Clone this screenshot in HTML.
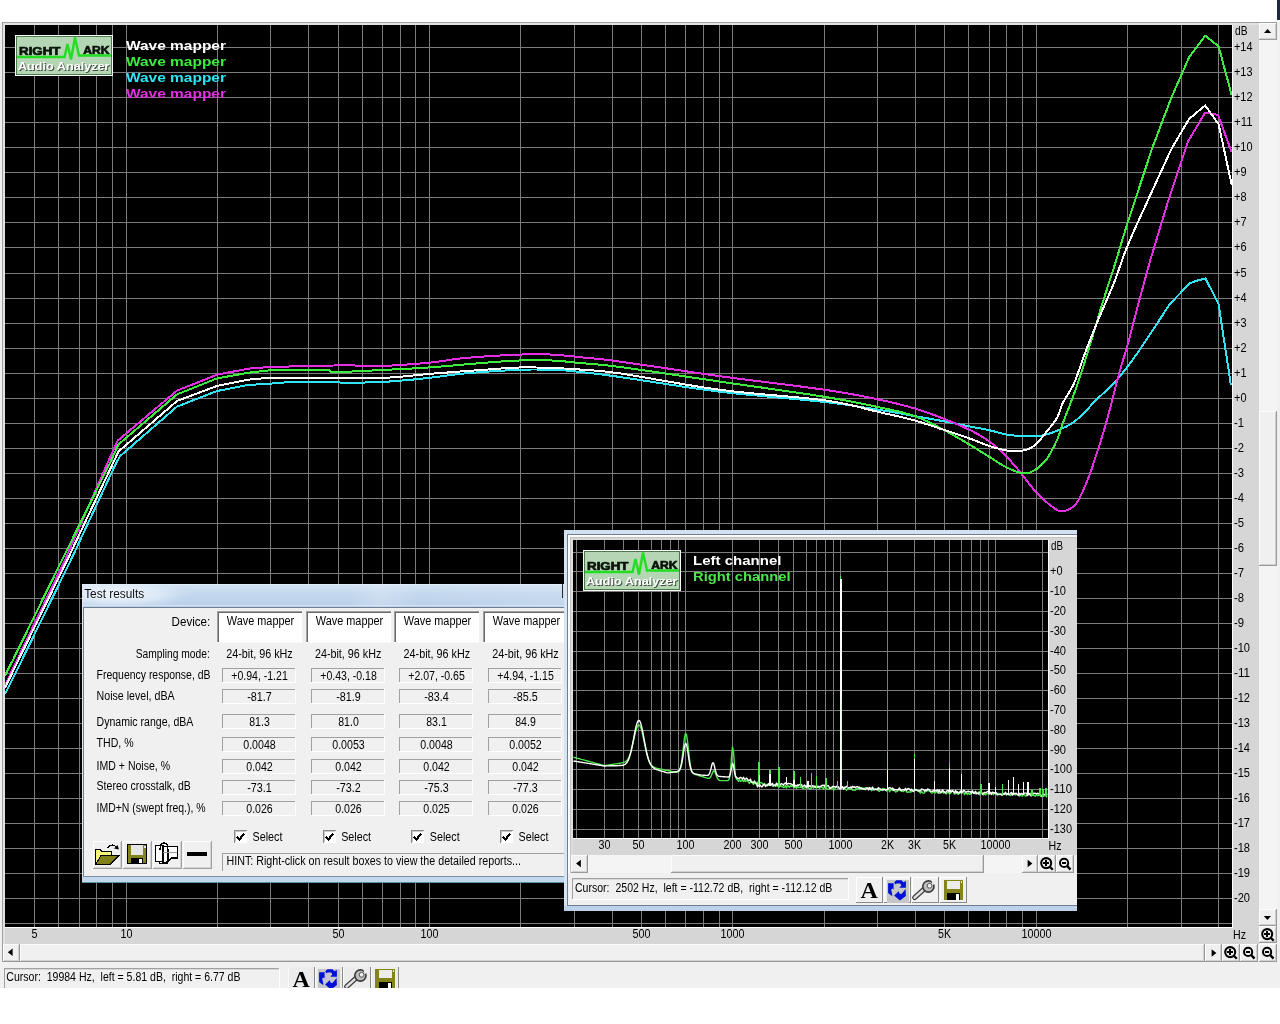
<!DOCTYPE html>
<html><head><meta charset="utf-8"><title>RightMark Audio Analyzer</title>
<style>html,body{margin:0;padding:0;background:#fff;width:1280px;height:1024px;overflow:hidden}svg{display:block;will-change:transform}text{white-space:pre}</style>
</head><body>
<svg width="1280" height="1024" viewBox="0 0 1280 1024" shape-rendering="crispEdges" style="font-family:'Liberation Sans',sans-serif">
<rect x="0" y="0" width="1280" height="1024" fill="#ffffff" />
<rect x="0" y="22" width="1280" height="966" fill="#f0f0f0" />
<rect x="1277" y="0" width="3" height="20" fill="#1c2b3f" />
<rect x="2" y="22" width="1275" height="1" fill="#a0a0a0"/>
<rect x="2" y="22" width="1" height="940" fill="#a0a0a0"/>
<rect x="3" y="23" width="1256" height="921" fill="#d6d6d6" />
<rect x="3" y="23" width="1256" height="2" fill="#e2e2e2" />
<rect x="3" y="23" width="2" height="921" fill="#e2e2e2" />
<rect x="5" y="25" width="1227" height="902" fill="#000000" />
<rect x="1232" y="25" width="1" height="903" fill="#ffffff"/>
<rect x="5" y="927" width="1228" height="1" fill="#ffffff"/>
<rect x="34" y="25" width="1" height="902" fill="#7c7c7c"/>
<rect x="58" y="25" width="1" height="902" fill="#7c7c7c"/>
<rect x="79" y="25" width="1" height="902" fill="#7c7c7c"/>
<rect x="96" y="25" width="1" height="902" fill="#7c7c7c"/>
<rect x="112" y="25" width="1" height="902" fill="#7c7c7c"/>
<rect x="126" y="25" width="1" height="902" fill="#7c7c7c"/>
<rect x="217" y="25" width="1" height="902" fill="#7c7c7c"/>
<rect x="270" y="25" width="1" height="902" fill="#7c7c7c"/>
<rect x="308" y="25" width="1" height="902" fill="#7c7c7c"/>
<rect x="338" y="25" width="1" height="902" fill="#7c7c7c"/>
<rect x="362" y="25" width="1" height="902" fill="#7c7c7c"/>
<rect x="382" y="25" width="1" height="902" fill="#7c7c7c"/>
<rect x="400" y="25" width="1" height="902" fill="#7c7c7c"/>
<rect x="415" y="25" width="1" height="902" fill="#7c7c7c"/>
<rect x="429" y="25" width="1" height="902" fill="#7c7c7c"/>
<rect x="520" y="25" width="1" height="902" fill="#7c7c7c"/>
<rect x="574" y="25" width="1" height="902" fill="#7c7c7c"/>
<rect x="612" y="25" width="1" height="902" fill="#7c7c7c"/>
<rect x="641" y="25" width="1" height="902" fill="#7c7c7c"/>
<rect x="665" y="25" width="1" height="902" fill="#7c7c7c"/>
<rect x="685" y="25" width="1" height="902" fill="#7c7c7c"/>
<rect x="703" y="25" width="1" height="902" fill="#7c7c7c"/>
<rect x="719" y="25" width="1" height="902" fill="#7c7c7c"/>
<rect x="732" y="25" width="1" height="902" fill="#7c7c7c"/>
<rect x="824" y="25" width="1" height="902" fill="#7c7c7c"/>
<rect x="877" y="25" width="1" height="902" fill="#7c7c7c"/>
<rect x="915" y="25" width="1" height="902" fill="#7c7c7c"/>
<rect x="944" y="25" width="1" height="902" fill="#7c7c7c"/>
<rect x="968" y="25" width="1" height="902" fill="#7c7c7c"/>
<rect x="989" y="25" width="1" height="902" fill="#7c7c7c"/>
<rect x="1006" y="25" width="1" height="902" fill="#7c7c7c"/>
<rect x="1022" y="25" width="1" height="902" fill="#7c7c7c"/>
<rect x="1036" y="25" width="1" height="902" fill="#7c7c7c"/>
<rect x="1127" y="25" width="1" height="902" fill="#7c7c7c"/>
<rect x="1181" y="25" width="1" height="902" fill="#7c7c7c"/>
<rect x="1218" y="25" width="1" height="902" fill="#7c7c7c"/>
<rect x="5" y="47" width="1227" height="1" fill="#7c7c7c"/>
<rect x="5" y="72" width="1227" height="1" fill="#7c7c7c"/>
<rect x="5" y="97" width="1227" height="1" fill="#7c7c7c"/>
<rect x="5" y="122" width="1227" height="1" fill="#7c7c7c"/>
<rect x="5" y="147" width="1227" height="1" fill="#7c7c7c"/>
<rect x="5" y="172" width="1227" height="1" fill="#7c7c7c"/>
<rect x="5" y="197" width="1227" height="1" fill="#7c7c7c"/>
<rect x="5" y="222" width="1227" height="1" fill="#7c7c7c"/>
<rect x="5" y="247" width="1227" height="1" fill="#7c7c7c"/>
<rect x="5" y="273" width="1227" height="1" fill="#7c7c7c"/>
<rect x="5" y="298" width="1227" height="1" fill="#7c7c7c"/>
<rect x="5" y="323" width="1227" height="1" fill="#7c7c7c"/>
<rect x="5" y="348" width="1227" height="1" fill="#7c7c7c"/>
<rect x="5" y="373" width="1227" height="1" fill="#7c7c7c"/>
<rect x="5" y="398" width="1227" height="1" fill="#7c7c7c"/>
<rect x="5" y="423" width="1227" height="1" fill="#7c7c7c"/>
<rect x="5" y="448" width="1227" height="1" fill="#7c7c7c"/>
<rect x="5" y="473" width="1227" height="1" fill="#7c7c7c"/>
<rect x="5" y="498" width="1227" height="1" fill="#7c7c7c"/>
<rect x="5" y="523" width="1227" height="1" fill="#7c7c7c"/>
<rect x="5" y="548" width="1227" height="1" fill="#7c7c7c"/>
<rect x="5" y="573" width="1227" height="1" fill="#7c7c7c"/>
<rect x="5" y="598" width="1227" height="1" fill="#7c7c7c"/>
<rect x="5" y="623" width="1227" height="1" fill="#7c7c7c"/>
<rect x="5" y="648" width="1227" height="1" fill="#7c7c7c"/>
<rect x="5" y="673" width="1227" height="1" fill="#7c7c7c"/>
<rect x="5" y="698" width="1227" height="1" fill="#7c7c7c"/>
<rect x="5" y="723" width="1227" height="1" fill="#7c7c7c"/>
<rect x="5" y="748" width="1227" height="1" fill="#7c7c7c"/>
<rect x="5" y="773" width="1227" height="1" fill="#7c7c7c"/>
<rect x="5" y="798" width="1227" height="1" fill="#7c7c7c"/>
<rect x="5" y="823" width="1227" height="1" fill="#7c7c7c"/>
<rect x="5" y="848" width="1227" height="1" fill="#7c7c7c"/>
<rect x="5" y="873" width="1227" height="1" fill="#7c7c7c"/>
<rect x="5" y="898" width="1227" height="1" fill="#7c7c7c"/>
<rect x="5" y="923" width="1227" height="1" fill="#7c7c7c"/>
<clipPath id="mainclip"><rect x="5" y="25" width="1227" height="902"/></clipPath>
<polyline points="5.0,694.0 21.9,660.0 70.9,560.0 115.7,464.0 120.0,456.2 177.0,406.6 217.0,391.0 248.0,385.0 272.0,383.5 290.0,382.0 295.0,381.9 300.8,381.9 307.0,381.9 313.4,381.9 319.5,381.9 325.0,382.0 329.7,382.1 333.8,382.2 337.6,382.4 341.5,382.6 345.7,382.7 350.5,382.7 356.0,382.6 362.0,382.6 368.3,382.4 374.9,382.2 381.5,381.9 388.0,381.6 394.6,381.2 401.3,380.6 408.0,380.0 414.8,379.4 421.5,378.7 428.0,378.0 434.1,377.3 439.9,376.5 445.6,375.7 451.5,374.9 457.9,374.1 465.0,373.4 473.3,372.7 482.5,372.0 492.2,371.3 501.9,370.7 511.0,370.2 519.0,369.8 525.8,369.6 531.8,369.5 537.2,369.5 542.3,369.5 547.1,369.6 552.0,369.8 556.6,370.0 560.6,370.2 564.4,370.4 568.4,370.7 572.8,371.2 578.0,371.7 583.4,372.3 588.7,372.9 594.4,373.6 601.1,374.4 609.5,375.5 620.0,377.0 633.3,379.0 648.9,381.4 666.1,384.0 684.1,386.8 702.4,389.4 720.0,391.7 737.8,393.7 756.5,395.5 775.3,397.3 793.5,398.9 810.3,400.5 825.0,402.0 837.3,403.5 847.8,404.9 856.9,406.3 865.0,407.6 872.6,408.8 880.0,410.0 887.0,411.1 893.2,412.2 898.8,413.2 904.1,414.1 909.2,415.1 914.4,416.0 919.6,416.9 924.6,417.8 929.5,418.7 934.3,419.6 939.0,420.4 943.6,421.3 948.2,422.2 952.6,423.1 957.0,423.9 961.3,424.8 965.4,425.6 969.4,426.4 973.2,427.1 976.8,427.8 980.2,428.4 983.6,429.1 986.8,429.7 990.0,430.4 993.1,431.1 996.0,431.9 998.9,432.7 1001.7,433.5 1004.5,434.2 1007.2,434.7 1009.9,435.1 1012.4,435.4 1014.9,435.6 1017.5,435.7 1020.0,435.8 1022.7,435.9 1025.5,436.0 1028.3,436.2 1031.3,436.3 1034.2,436.3 1037.1,436.2 1040.0,435.9 1042.8,435.4 1045.6,434.7 1048.4,433.9 1051.2,433.0 1054.1,431.9 1057.0,430.7 1060.0,429.4 1063.0,428.1 1066.0,426.7 1069.1,425.0 1072.3,423.1 1075.5,420.8 1078.7,418.0 1082.0,414.9 1085.4,411.5 1088.8,407.8 1092.2,404.1 1095.8,400.5 1099.5,396.9 1103.2,393.4 1107.1,389.7 1111.0,386.0 1114.9,382.0 1118.7,377.7 1122.4,373.2 1126.1,368.6 1129.7,363.7 1133.5,358.6 1137.4,353.1 1141.5,347.2 1170.1,303.7 1189.9,283.2 1197.4,280.5 1205.6,278.5 1218.6,304.4 1230.9,385.1" fill="none" stroke="#30e4f4" stroke-width="2" stroke-linejoin="round" clip-path="url(#mainclip)" shape-rendering="crispEdges"/>
<polyline points="5.0,685.4 17.0,660.0 65.0,560.0 107.1,464.0 117.7,440.6 177.0,390.6 217.0,374.7 248.0,368.7 272.0,366.8 325.0,365.9 330.1,365.7 333.7,365.5 336.4,365.3 338.7,365.1 341.4,365.0 345.0,365.0 349.3,365.1 353.7,365.4 358.5,365.8 363.7,366.1 369.5,366.3 376.0,366.3 383.6,366.0 392.3,365.5 401.6,364.9 411.0,364.2 420.0,363.5 428.0,362.8 434.8,362.1 440.8,361.2 446.4,360.4 452.0,359.5 458.0,358.7 465.0,358.0 473.3,357.3 482.5,356.6 492.2,356.0 501.9,355.4 511.0,355.0 519.0,354.6 525.8,354.4 531.8,354.3 537.2,354.2 542.3,354.3 547.1,354.4 552.0,354.6 556.6,354.8 560.6,355.1 564.4,355.5 568.4,355.9 572.8,356.4 578.0,357.0 583.4,357.5 588.7,358.0 594.4,358.5 601.1,359.2 609.5,360.2 620.0,361.6 633.3,363.5 648.9,365.8 666.1,368.3 684.1,371.0 702.4,373.7 720.0,376.2 737.8,378.6 756.5,380.9 775.3,383.3 793.5,385.6 810.3,387.8 825.0,389.8 837.3,391.7 847.8,393.5 856.9,395.1 865.0,396.7 872.6,398.3 880.0,399.8 887.0,401.3 893.2,402.7 898.8,404.1 904.1,405.5 909.2,406.9 914.4,408.4 919.6,410.0 924.6,411.7 929.5,413.4 934.3,415.1 939.0,416.9 943.6,418.7 948.2,420.5 952.6,422.3 957.0,424.1 961.3,426.0 965.4,427.9 969.4,429.8 973.2,431.7 976.8,433.6 980.2,435.6 983.6,437.6 986.8,439.7 990.0,441.9 993.1,444.2 996.0,446.7 998.9,449.2 1001.7,451.8 1004.5,454.5 1007.2,457.3 1009.9,460.2 1012.5,463.1 1015.1,466.1 1017.6,469.2 1020.1,472.3 1022.7,475.4 1025.2,478.6 1027.7,481.8 1030.2,485.1 1032.8,488.3 1035.3,491.4 1038.0,494.3 1040.9,497.1 1043.9,499.9 1047.1,502.7 1050.1,505.1 1052.9,507.2 1055.3,508.9 1057.2,510.1 1058.7,510.9 1060.0,511.3 1061.2,511.5 1062.5,511.3 1064.0,511.0 1065.8,510.5 1067.8,509.8 1069.9,508.8 1072.0,507.6 1074.1,505.9 1076.0,503.8 1077.8,501.1 1079.6,498.0 1081.4,494.4 1083.1,490.6 1084.7,486.8 1086.3,483.0 1087.8,479.5 1089.1,476.0 1090.4,472.5 1091.7,468.8 1093.1,464.6 1094.6,460.0 1096.3,454.8 1098.1,449.2 1100.0,443.3 1102.0,437.0 1104.0,430.3 1106.0,423.4 1108.1,415.8 1110.3,407.5 1112.5,398.8 1114.7,390.2 1116.8,382.2 1118.7,375.0 1120.4,369.1 1121.9,364.0 1123.2,359.5 1124.6,355.1 1126.0,350.3 1127.6,344.7 1129.4,338.2 1131.2,331.2 1133.1,323.8 1135.1,316.3 1137.1,308.8 1139.0,301.5 1150.3,260.0 1168.5,200.0 1188.1,141.3 1205.2,112.6 1218.0,114.8 1231.7,152.4" fill="none" stroke="#e42ee4" stroke-width="2" stroke-linejoin="round" clip-path="url(#mainclip)" shape-rendering="crispEdges"/>
<polyline points="5.0,675.4 12.9,660.0 62.0,560.0 109.5,464.0 118.4,444.5 177.0,394.4 217.0,378.4 248.0,372.8 272.0,370.0 325.0,370.0 328.7,370.3 330.0,370.7 330.2,371.1 330.2,371.5 331.1,371.9 334.0,372.0 339.0,371.9 345.2,371.7 352.3,371.5 360.0,371.1 368.0,370.7 376.0,370.3 384.0,369.9 392.4,369.5 401.1,369.1 410.0,368.6 419.0,368.1 428.0,367.5 437.3,366.8 447.1,366.0 457.1,365.1 466.7,364.3 475.8,363.5 484.0,362.8 491.1,362.3 497.3,361.8 502.9,361.4 508.3,361.0 513.5,360.7 519.0,360.5 524.7,360.3 530.4,360.2 536.1,360.2 541.6,360.2 546.9,360.3 552.0,360.5 556.6,360.7 560.6,361.0 564.4,361.4 568.4,361.8 572.8,362.3 578.0,362.8 583.4,363.3 588.7,363.7 594.4,364.1 601.1,364.8 609.5,365.7 620.0,367.0 633.3,368.8 648.9,371.1 666.1,373.6 684.1,376.3 702.4,379.0 720.0,381.6 737.8,384.2 756.5,386.8 775.3,389.5 793.5,392.1 810.3,394.6 825.0,396.9 837.3,399.0 847.8,400.9 856.9,402.6 865.0,404.3 872.6,405.9 880.0,407.5 887.0,409.0 893.2,410.3 898.8,411.5 904.1,412.9 909.2,414.3 914.4,416.0 919.6,418.0 924.6,420.2 929.5,422.5 934.3,424.9 939.0,427.4 943.6,429.8 948.2,432.2 952.6,434.7 957.0,437.2 961.3,439.7 965.4,442.1 969.4,444.5 973.2,446.8 976.8,449.0 980.2,451.2 983.6,453.3 986.8,455.3 990.0,457.3 993.1,459.2 996.0,461.1 998.9,463.0 1001.7,464.7 1004.5,466.3 1007.2,467.7 1009.9,469.0 1012.6,470.2 1015.3,471.3 1017.9,472.3 1020.3,472.9 1022.7,473.3 1024.9,473.4 1027.0,473.2 1028.9,472.8 1030.8,472.2 1032.7,471.3 1034.7,470.2 1036.7,468.9 1038.8,467.4 1040.8,465.6 1042.8,463.6 1044.8,461.4 1046.7,459.0 1048.6,456.3 1050.4,453.2 1052.2,449.8 1054.0,446.4 1055.6,443.1 1057.0,440.0 1058.1,437.4 1058.9,435.2 1059.6,433.1 1060.3,430.6 1061.3,427.5 1062.8,423.4 1064.8,418.0 1067.3,411.6 1070.0,404.6 1072.8,397.2 1075.5,389.8 1078.0,382.7 1080.3,375.9 1082.5,369.0 1084.6,362.2 1086.7,355.4 1088.8,348.6 1090.8,342.0 1092.8,335.5 1094.7,329.0 1096.6,322.7 1098.5,316.4 1100.3,310.2 1102.2,304.0 1104.1,298.1 1105.9,292.4 1107.7,286.7 1109.6,281.0 1111.5,275.0 1113.6,268.5 1115.9,261.2 1118.3,253.2 1120.8,244.8 1123.3,236.7 1125.6,229.2 1127.6,222.8 1129.1,218.0 1130.2,214.6 1131.2,211.8 1132.1,209.0 1133.4,205.3 1135.1,200.1 1152.2,148.1 1171.0,98.5 1189.0,57.5 1205.2,35.6 1218.6,46.4 1231.7,95.1" fill="none" stroke="#3cec3c" stroke-width="2" stroke-linejoin="round" clip-path="url(#mainclip)" shape-rendering="crispEdges"/>
<polyline points="5.0,687.9 18.4,660.0 67.3,560.0 112.6,464.0 118.4,451.6 177.0,401.0 217.0,386.0 248.0,379.7 272.0,377.5 325.0,377.5 329.2,377.5 331.3,377.5 332.2,377.6 333.2,377.6 335.1,377.6 339.0,377.6 345.2,377.6 353.1,377.7 361.9,377.8 371.0,377.9 379.9,377.8 388.0,377.6 395.0,377.2 401.4,376.7 407.6,376.1 413.8,375.4 420.5,374.7 428.0,374.0 436.7,373.3 446.3,372.6 456.3,371.8 466.3,371.1 475.7,370.4 484.0,369.8 491.1,369.3 497.3,368.8 502.9,368.4 508.3,368.0 513.5,367.7 519.0,367.5 524.7,367.4 530.4,367.4 536.1,367.5 541.6,367.7 546.9,367.8 552.0,368.0 556.6,368.2 560.6,368.3 564.4,368.5 568.4,368.7 572.8,369.0 578.0,369.4 583.4,369.8 588.7,370.1 594.4,370.5 601.1,371.1 609.5,372.0 620.0,373.4 633.3,375.5 648.9,378.2 666.1,381.2 684.1,384.3 702.4,387.3 720.0,389.8 737.8,391.9 756.5,393.7 775.3,395.4 793.5,397.0 810.3,398.6 825.0,400.4 837.3,402.4 847.8,404.4 856.9,406.5 865.0,408.6 872.6,410.5 880.0,412.3 887.0,413.9 893.2,415.2 898.8,416.5 904.1,417.7 909.2,419.0 914.4,420.4 919.6,421.9 924.6,423.5 929.5,425.1 934.3,426.7 939.0,428.3 943.6,429.8 948.2,431.3 952.6,432.8 957.0,434.2 961.3,435.6 965.4,437.0 969.4,438.4 973.2,439.8 976.8,441.2 980.2,442.6 983.6,443.9 986.8,445.1 990.0,446.2 993.1,447.2 996.0,448.1 998.9,448.8 1001.7,449.5 1004.5,450.1 1007.2,450.5 1009.9,450.8 1012.6,451.0 1015.3,451.1 1017.9,451.0 1020.3,450.9 1022.7,450.5 1024.9,450.0 1027.0,449.5 1028.9,448.8 1030.8,447.9 1032.7,446.7 1034.7,445.3 1036.7,443.5 1038.8,441.4 1040.8,439.0 1042.8,436.5 1044.8,434.0 1046.7,431.6 1048.6,429.3 1050.4,427.0 1052.2,424.8 1054.0,422.5 1055.6,420.2 1057.0,417.8 1058.2,415.5 1059.1,413.1 1059.8,410.8 1060.6,408.4 1061.6,405.8 1062.8,403.0 1064.4,400.0 1066.3,396.9 1068.3,393.7 1070.4,390.2 1072.4,386.6 1074.3,382.7 1076.0,378.6 1077.6,374.2 1079.2,369.7 1080.8,364.9 1082.5,360.0 1084.4,354.8 1086.5,349.3 1088.7,343.5 1091.1,337.5 1093.5,331.4 1096.0,325.3 1098.4,319.3 1100.9,313.4 1103.4,307.6 1106.0,301.7 1108.6,295.8 1111.1,289.9 1113.6,283.8 1115.9,277.7 1118.1,271.6 1120.3,265.4 1122.5,259.1 1124.9,252.5 1127.6,245.7 1130.6,238.6 1133.8,231.2 1137.2,223.6 1140.8,215.8 1144.4,208.0 1148.0,200.0 1171.0,149.8 1189.0,119.0 1205.2,105.4 1218.6,124.2 1231.7,184.9" fill="none" stroke="#ffffff" stroke-width="2" stroke-linejoin="round" clip-path="url(#mainclip)" shape-rendering="crispEdges"/>
<rect x="15" y="35" width="98" height="41" fill="#ffffff" />
<rect x="16" y="36" width="96" height="39" fill="#4a7a4a" />
<rect x="17" y="37" width="94" height="37" fill="#b4d6b4" />
<text x="19" y="54.5" font-family="Liberation Sans" font-size="11.5" font-weight="bold" fill="#0a140a" textLength="41.5" lengthAdjust="spacingAndGlyphs" stroke="#0a140a" stroke-width="0.7">RIGHT</text>
<text x="83.3" y="53.5" font-family="Liberation Sans" font-size="11.5" font-weight="bold" fill="#0a140a" textLength="26.2" lengthAdjust="spacingAndGlyphs" stroke="#0a140a" stroke-width="0.7">ARK</text>
<polyline points="17,57 64.5,57 67.5,44 71,59.5 75,37.5 79,55.5 111,55.5" fill="none" stroke="#22dd22" stroke-width="2.4" stroke-linejoin="miter" shape-rendering="geometricPrecision"/>
<text x="19" y="71" font-family="Liberation Sans" font-size="11.5" font-weight="bold" fill="#404a40" textLength="91.5" lengthAdjust="spacingAndGlyphs" >Audio Analyzer</text>
<text x="18" y="70" font-family="Liberation Sans" font-size="11.5" font-weight="bold" fill="#ffffff" textLength="91.5" lengthAdjust="spacingAndGlyphs" >Audio Analyzer</text>
<text x="126" y="50" font-family="Liberation Sans" font-size="12.5" font-weight="bold" fill="#ffffff" textLength="100" lengthAdjust="spacingAndGlyphs" >Wave mapper</text>
<text x="126" y="66" font-family="Liberation Sans" font-size="12.5" font-weight="bold" fill="#3cec3c" textLength="100" lengthAdjust="spacingAndGlyphs" >Wave mapper</text>
<text x="126" y="82" font-family="Liberation Sans" font-size="12.5" font-weight="bold" fill="#30e4f4" textLength="100" lengthAdjust="spacingAndGlyphs" >Wave mapper</text>
<text x="126" y="98" font-family="Liberation Sans" font-size="12.5" font-weight="bold" fill="#e42ee4" textLength="100" lengthAdjust="spacingAndGlyphs" >Wave mapper</text>
<text x="1235" y="34.6" font-family="Liberation Sans" font-size="12" font-weight="normal" fill="#000" textLength="12.5" lengthAdjust="spacingAndGlyphs" >dB</text>
<text x="1234" y="51" font-family="Liberation Sans" font-size="12" font-weight="normal" fill="#000" textLength="18.5" lengthAdjust="spacingAndGlyphs" >+14</text>
<text x="1234" y="76" font-family="Liberation Sans" font-size="12" font-weight="normal" fill="#000" textLength="18.5" lengthAdjust="spacingAndGlyphs" >+13</text>
<text x="1234" y="101" font-family="Liberation Sans" font-size="12" font-weight="normal" fill="#000" textLength="18.5" lengthAdjust="spacingAndGlyphs" >+12</text>
<text x="1234" y="126" font-family="Liberation Sans" font-size="12" font-weight="normal" fill="#000" textLength="18.5" lengthAdjust="spacingAndGlyphs" >+11</text>
<text x="1234" y="151" font-family="Liberation Sans" font-size="12" font-weight="normal" fill="#000" textLength="18.5" lengthAdjust="spacingAndGlyphs" >+10</text>
<text x="1234" y="176" font-family="Liberation Sans" font-size="12" font-weight="normal" fill="#000" textLength="12.5" lengthAdjust="spacingAndGlyphs" >+9</text>
<text x="1234" y="201" font-family="Liberation Sans" font-size="12" font-weight="normal" fill="#000" textLength="12.5" lengthAdjust="spacingAndGlyphs" >+8</text>
<text x="1234" y="226" font-family="Liberation Sans" font-size="12" font-weight="normal" fill="#000" textLength="12.5" lengthAdjust="spacingAndGlyphs" >+7</text>
<text x="1234" y="251" font-family="Liberation Sans" font-size="12" font-weight="normal" fill="#000" textLength="12.5" lengthAdjust="spacingAndGlyphs" >+6</text>
<text x="1234" y="277" font-family="Liberation Sans" font-size="12" font-weight="normal" fill="#000" textLength="12.5" lengthAdjust="spacingAndGlyphs" >+5</text>
<text x="1234" y="302" font-family="Liberation Sans" font-size="12" font-weight="normal" fill="#000" textLength="12.5" lengthAdjust="spacingAndGlyphs" >+4</text>
<text x="1234" y="327" font-family="Liberation Sans" font-size="12" font-weight="normal" fill="#000" textLength="12.5" lengthAdjust="spacingAndGlyphs" >+3</text>
<text x="1234" y="352" font-family="Liberation Sans" font-size="12" font-weight="normal" fill="#000" textLength="12.5" lengthAdjust="spacingAndGlyphs" >+2</text>
<text x="1234" y="377" font-family="Liberation Sans" font-size="12" font-weight="normal" fill="#000" textLength="12.5" lengthAdjust="spacingAndGlyphs" >+1</text>
<text x="1234" y="402" font-family="Liberation Sans" font-size="12" font-weight="normal" fill="#000" textLength="12.5" lengthAdjust="spacingAndGlyphs" >+0</text>
<text x="1234" y="427" font-family="Liberation Sans" font-size="12" font-weight="normal" fill="#000" textLength="10" lengthAdjust="spacingAndGlyphs" >-1</text>
<text x="1234" y="452" font-family="Liberation Sans" font-size="12" font-weight="normal" fill="#000" textLength="10" lengthAdjust="spacingAndGlyphs" >-2</text>
<text x="1234" y="477" font-family="Liberation Sans" font-size="12" font-weight="normal" fill="#000" textLength="10" lengthAdjust="spacingAndGlyphs" >-3</text>
<text x="1234" y="502" font-family="Liberation Sans" font-size="12" font-weight="normal" fill="#000" textLength="10" lengthAdjust="spacingAndGlyphs" >-4</text>
<text x="1234" y="527" font-family="Liberation Sans" font-size="12" font-weight="normal" fill="#000" textLength="10" lengthAdjust="spacingAndGlyphs" >-5</text>
<text x="1234" y="552" font-family="Liberation Sans" font-size="12" font-weight="normal" fill="#000" textLength="10" lengthAdjust="spacingAndGlyphs" >-6</text>
<text x="1234" y="577" font-family="Liberation Sans" font-size="12" font-weight="normal" fill="#000" textLength="10" lengthAdjust="spacingAndGlyphs" >-7</text>
<text x="1234" y="602" font-family="Liberation Sans" font-size="12" font-weight="normal" fill="#000" textLength="10" lengthAdjust="spacingAndGlyphs" >-8</text>
<text x="1234" y="627" font-family="Liberation Sans" font-size="12" font-weight="normal" fill="#000" textLength="10" lengthAdjust="spacingAndGlyphs" >-9</text>
<text x="1234" y="652" font-family="Liberation Sans" font-size="12" font-weight="normal" fill="#000" textLength="16" lengthAdjust="spacingAndGlyphs" >-10</text>
<text x="1234" y="677" font-family="Liberation Sans" font-size="12" font-weight="normal" fill="#000" textLength="16" lengthAdjust="spacingAndGlyphs" >-11</text>
<text x="1234" y="702" font-family="Liberation Sans" font-size="12" font-weight="normal" fill="#000" textLength="16" lengthAdjust="spacingAndGlyphs" >-12</text>
<text x="1234" y="727" font-family="Liberation Sans" font-size="12" font-weight="normal" fill="#000" textLength="16" lengthAdjust="spacingAndGlyphs" >-13</text>
<text x="1234" y="752" font-family="Liberation Sans" font-size="12" font-weight="normal" fill="#000" textLength="16" lengthAdjust="spacingAndGlyphs" >-14</text>
<text x="1234" y="777" font-family="Liberation Sans" font-size="12" font-weight="normal" fill="#000" textLength="16" lengthAdjust="spacingAndGlyphs" >-15</text>
<text x="1234" y="802" font-family="Liberation Sans" font-size="12" font-weight="normal" fill="#000" textLength="16" lengthAdjust="spacingAndGlyphs" >-16</text>
<text x="1234" y="827" font-family="Liberation Sans" font-size="12" font-weight="normal" fill="#000" textLength="16" lengthAdjust="spacingAndGlyphs" >-17</text>
<text x="1234" y="852" font-family="Liberation Sans" font-size="12" font-weight="normal" fill="#000" textLength="16" lengthAdjust="spacingAndGlyphs" >-18</text>
<text x="1234" y="877" font-family="Liberation Sans" font-size="12" font-weight="normal" fill="#000" textLength="16" lengthAdjust="spacingAndGlyphs" >-19</text>
<text x="1234" y="902" font-family="Liberation Sans" font-size="12" font-weight="normal" fill="#000" textLength="16" lengthAdjust="spacingAndGlyphs" >-20</text>
<text x="34.5" y="937.8" font-family="Liberation Sans" font-size="12" font-weight="normal" fill="#000" textLength="6" lengthAdjust="spacingAndGlyphs" text-anchor="middle" >5</text>
<text x="126.5" y="937.8" font-family="Liberation Sans" font-size="12" font-weight="normal" fill="#000" textLength="12" lengthAdjust="spacingAndGlyphs" text-anchor="middle" >10</text>
<text x="338.5" y="937.8" font-family="Liberation Sans" font-size="12" font-weight="normal" fill="#000" textLength="12" lengthAdjust="spacingAndGlyphs" text-anchor="middle" >50</text>
<text x="429.5" y="937.8" font-family="Liberation Sans" font-size="12" font-weight="normal" fill="#000" textLength="18" lengthAdjust="spacingAndGlyphs" text-anchor="middle" >100</text>
<text x="641.5" y="937.8" font-family="Liberation Sans" font-size="12" font-weight="normal" fill="#000" textLength="18" lengthAdjust="spacingAndGlyphs" text-anchor="middle" >500</text>
<text x="732.5" y="937.8" font-family="Liberation Sans" font-size="12" font-weight="normal" fill="#000" textLength="24" lengthAdjust="spacingAndGlyphs" text-anchor="middle" >1000</text>
<text x="944.5" y="937.8" font-family="Liberation Sans" font-size="12" font-weight="normal" fill="#000" textLength="13" lengthAdjust="spacingAndGlyphs" text-anchor="middle" >5K</text>
<text x="1036.5" y="937.8" font-family="Liberation Sans" font-size="12" font-weight="normal" fill="#000" textLength="30" lengthAdjust="spacingAndGlyphs" text-anchor="middle" >10000</text>
<text x="1233" y="938.7" font-family="Liberation Sans" font-size="12" font-weight="normal" fill="#000" textLength="13" lengthAdjust="spacingAndGlyphs" >Hz</text>
<rect x="1259" y="23" width="18" height="939" fill="#f4f4f4" />
<rect x="1259" y="23" width="18" height="17" fill="#f0f0f0" />
<rect x="1259" y="23" width="18" height="1" fill="#fcfcfc"/>
<rect x="1259" y="23" width="1" height="17" fill="#fcfcfc"/>
<rect x="1259" y="39" width="18" height="1" fill="#9a9a9a"/>
<rect x="1276" y="23" width="1" height="17" fill="#9a9a9a"/>
<rect x="1260" y="38" width="16" height="1" fill="#d0d0d0"/>
<rect x="1275" y="24" width="1" height="15" fill="#d0d0d0"/>
<polygon points="1264.0,32.9 1271.1999999999998,32.9 1267.6,28.9" fill="#000" shape-rendering="geometricPrecision"/>
<rect x="1259" y="411" width="18" height="155" fill="#f0f0f0" />
<rect x="1259" y="411" width="18" height="1" fill="#fcfcfc"/>
<rect x="1259" y="411" width="1" height="155" fill="#fcfcfc"/>
<rect x="1259" y="565" width="18" height="1" fill="#9a9a9a"/>
<rect x="1276" y="411" width="1" height="155" fill="#9a9a9a"/>
<rect x="1260" y="564" width="16" height="1" fill="#d0d0d0"/>
<rect x="1275" y="412" width="1" height="153" fill="#d0d0d0"/>
<rect x="1259" y="909" width="18" height="17" fill="#f0f0f0" />
<rect x="1259" y="909" width="18" height="1" fill="#fcfcfc"/>
<rect x="1259" y="909" width="1" height="17" fill="#fcfcfc"/>
<rect x="1259" y="925" width="18" height="1" fill="#9a9a9a"/>
<rect x="1276" y="909" width="1" height="17" fill="#9a9a9a"/>
<rect x="1260" y="924" width="16" height="1" fill="#d0d0d0"/>
<rect x="1275" y="910" width="1" height="15" fill="#d0d0d0"/>
<polygon points="1263.8000000000002,916 1271.0,916 1267.4,920" fill="#000" shape-rendering="geometricPrecision"/>
<rect x="1259" y="926" width="18" height="17" fill="#f0f0f0" />
<rect x="1259" y="926" width="18" height="1" fill="#fcfcfc"/>
<rect x="1259" y="926" width="1" height="17" fill="#fcfcfc"/>
<rect x="1259" y="942" width="18" height="1" fill="#9a9a9a"/>
<rect x="1276" y="926" width="1" height="17" fill="#9a9a9a"/>
<rect x="1260" y="941" width="16" height="1" fill="#d0d0d0"/>
<rect x="1275" y="927" width="1" height="15" fill="#d0d0d0"/>
<circle cx="1267.2" cy="934.1" r="5" fill="none" stroke="#000" stroke-width="2.1" shape-rendering="geometricPrecision"/>
<line x1="1270.8" y1="937.8000000000001" x2="1273.8" y2="940.8000000000001" stroke="#000" stroke-width="2.3" shape-rendering="geometricPrecision"/>
<rect x="1264.3" y="933.2" width="6" height="1.9" fill="#000" />
<rect x="1266.3" y="931.2" width="1.9" height="6" fill="#000" />
<rect x="1259" y="944" width="18" height="18" fill="#f0f0f0" />
<rect x="1259" y="944" width="18" height="1" fill="#fcfcfc"/>
<rect x="1259" y="944" width="1" height="18" fill="#fcfcfc"/>
<rect x="1259" y="961" width="18" height="1" fill="#9a9a9a"/>
<rect x="1276" y="944" width="1" height="18" fill="#9a9a9a"/>
<rect x="1260" y="960" width="16" height="1" fill="#d0d0d0"/>
<rect x="1275" y="945" width="1" height="16" fill="#d0d0d0"/>
<circle cx="1267.1000000000001" cy="951.9" r="4.1" fill="none" stroke="#000" stroke-width="2.0" shape-rendering="geometricPrecision"/>
<line x1="1270.1000000000001" y1="954.9" x2="1273.5" y2="958.6" stroke="#000" stroke-width="2.3" shape-rendering="geometricPrecision"/>
<rect x="1265.0" y="951.2" width="4.2" height="1.7" fill="#000" />
<rect x="3" y="944" width="17" height="18" fill="#f0f0f0" />
<rect x="3" y="944" width="17" height="1" fill="#fcfcfc"/>
<rect x="3" y="944" width="1" height="18" fill="#fcfcfc"/>
<rect x="3" y="961" width="17" height="1" fill="#9a9a9a"/>
<rect x="19" y="944" width="1" height="18" fill="#9a9a9a"/>
<rect x="4" y="960" width="15" height="1" fill="#d0d0d0"/>
<rect x="18" y="945" width="1" height="16" fill="#d0d0d0"/>
<polygon points="12.6,948.5999999999999 12.6,956.0 7.799999999999999,952.3" fill="#000" shape-rendering="geometricPrecision"/>
<rect x="20" y="944" width="1185" height="18" fill="#f0f0f0" />
<rect x="20" y="944" width="1185" height="1" fill="#fcfcfc"/>
<rect x="20" y="944" width="1" height="18" fill="#fcfcfc"/>
<rect x="20" y="961" width="1185" height="1" fill="#9a9a9a"/>
<rect x="1204" y="944" width="1" height="18" fill="#9a9a9a"/>
<rect x="21" y="960" width="1183" height="1" fill="#d0d0d0"/>
<rect x="1203" y="945" width="1" height="16" fill="#d0d0d0"/>
<rect x="1205" y="944" width="17" height="18" fill="#f0f0f0" />
<rect x="1205" y="944" width="17" height="1" fill="#fcfcfc"/>
<rect x="1205" y="944" width="1" height="18" fill="#fcfcfc"/>
<rect x="1205" y="961" width="17" height="1" fill="#9a9a9a"/>
<rect x="1221" y="944" width="1" height="18" fill="#9a9a9a"/>
<rect x="1206" y="960" width="15" height="1" fill="#d0d0d0"/>
<rect x="1220" y="945" width="1" height="16" fill="#d0d0d0"/>
<polygon points="1211.6,949.3 1211.6,956.7 1216.4,953" fill="#000" shape-rendering="geometricPrecision"/>
<rect x="1222" y="944" width="18" height="18" fill="#f0f0f0" />
<rect x="1222" y="944" width="18" height="1" fill="#fcfcfc"/>
<rect x="1222" y="944" width="1" height="18" fill="#fcfcfc"/>
<rect x="1222" y="961" width="18" height="1" fill="#9a9a9a"/>
<rect x="1239" y="944" width="1" height="18" fill="#9a9a9a"/>
<rect x="1223" y="960" width="16" height="1" fill="#d0d0d0"/>
<rect x="1238" y="945" width="1" height="16" fill="#d0d0d0"/>
<circle cx="1230.2" cy="952.1" r="5" fill="none" stroke="#000" stroke-width="2.1" shape-rendering="geometricPrecision"/>
<line x1="1233.8" y1="955.8000000000001" x2="1236.8" y2="958.8000000000001" stroke="#000" stroke-width="2.3" shape-rendering="geometricPrecision"/>
<rect x="1227.3" y="951.2" width="6" height="1.9" fill="#000" />
<rect x="1229.3" y="949.2" width="1.9" height="6" fill="#000" />
<rect x="1240" y="944" width="18" height="18" fill="#f0f0f0" />
<rect x="1240" y="944" width="18" height="1" fill="#fcfcfc"/>
<rect x="1240" y="944" width="1" height="18" fill="#fcfcfc"/>
<rect x="1240" y="961" width="18" height="1" fill="#9a9a9a"/>
<rect x="1257" y="944" width="1" height="18" fill="#9a9a9a"/>
<rect x="1241" y="960" width="16" height="1" fill="#d0d0d0"/>
<rect x="1256" y="945" width="1" height="16" fill="#d0d0d0"/>
<circle cx="1248.1000000000001" cy="951.9" r="4.1" fill="none" stroke="#000" stroke-width="2.0" shape-rendering="geometricPrecision"/>
<line x1="1251.1000000000001" y1="954.9" x2="1254.5" y2="958.6" stroke="#000" stroke-width="2.3" shape-rendering="geometricPrecision"/>
<rect x="1246.0" y="951.2" width="4.2" height="1.7" fill="#000" />
<rect x="4" y="968" width="276" height="20" fill="#f0f0f0" />
<rect x="4" y="968" width="276" height="1" fill="#a0a0a0"/>
<rect x="4" y="968" width="1" height="20" fill="#a0a0a0"/>
<rect x="5" y="969" width="274" height="1" fill="#d8d8d8"/>
<rect x="279" y="968" width="1" height="20" fill="#ffffff"/>
<text x="6.3" y="980.6" font-family="Liberation Sans" font-size="12" font-weight="normal" fill="#000" textLength="234.2" lengthAdjust="spacingAndGlyphs" >Cursor:  19984 Hz,  left = 5.81 dB,  right = 6.77 dB</text>
<rect x="288" y="967" width="27" height="21" fill="#ececec" />
<rect x="314" y="967" width="1" height="21" fill="#8a8a8a"/>
<rect x="288" y="967" width="1" height="21" fill="#fafafa"/>
<text x="301.2" y="986.8" font-family="Liberation Serif" font-size="24" font-weight="bold" fill="#000" text-anchor="middle" shape-rendering="geometricPrecision">A</text>
<rect x="315" y="967" width="28" height="21" fill="#ececec" />
<rect x="342" y="967" width="1" height="21" fill="#8a8a8a"/>
<rect x="315" y="967" width="1" height="21" fill="#fafafa"/>
<rect x="318.3" y="968.7" width="22" height="23" fill="#c6c6c8" />
<polygon points="325.1,971.5 327.3,969.2 332.5,969.2 334.4,971.2 336.9,970.0 336.9,976.7 330.3,976.7 332.3,974.6 331.3,972.6 327.4,972.6 326.6,973.4" fill="#0010d8" shape-rendering="geometricPrecision"/>
<polygon points="319.1,972.3 324.6,972.3 324.6,978.6 323.3,977.6 322.2,978.4 323.4,984.4 322.6,984.8 319.1,981.9" fill="#0010d8" shape-rendering="geometricPrecision"/>
<polygon points="336.6,978.0 336.9,985.1 330.9,989.5 325.1,984.6 329.8,980.2 330.6,982.8 332.4,982.9 335.0,980.0" fill="#0010d8" shape-rendering="geometricPrecision"/>
<rect x="343" y="967" width="28" height="21" fill="#ececec" />
<rect x="370" y="967" width="1" height="21" fill="#8a8a8a"/>
<rect x="343" y="967" width="1" height="21" fill="#fafafa"/>
<line x1="346.6" y1="986.6" x2="356.6" y2="977.6" stroke="#3c3c3c" stroke-width="5" stroke-linecap="round" shape-rendering="geometricPrecision"/>
<line x1="346.6" y1="986.6" x2="356.6" y2="977.6" stroke="#e0e0e0" stroke-width="2.6" stroke-linecap="round" shape-rendering="geometricPrecision"/>
<circle cx="360.4" cy="975.5" r="5.6" fill="#bdbdbd" stroke="#3c3c3c" stroke-width="1.6" shape-rendering="geometricPrecision"/>
<circle cx="361.6" cy="974.8" r="2.4" fill="#eeeeee" stroke="#555" stroke-width="1" shape-rendering="geometricPrecision"/>
<path d="M363.5,969.2 L367.2,972.5 L364.5,974.2 Z" fill="#f0f0f0" shape-rendering="geometricPrecision"/>
<rect x="371" y="967" width="28" height="21" fill="#ececec" />
<rect x="398" y="967" width="1" height="21" fill="#8a8a8a"/>
<rect x="371" y="967" width="1" height="21" fill="#fafafa"/>
<rect x="375" y="969" width="20" height="19" fill="#84841c" />
<rect x="378.5" y="970" width="13" height="8" fill="#ececec" />
<rect x="378.5" y="982" width="13.5" height="6" fill="#000" />
<rect x="387.5" y="983" width="3" height="5" fill="#ffffff" />
<rect x="392.5" y="970" width="1.5" height="1.5" fill="#ececec" />
<rect x="0" y="988" width="1280" height="36" fill="#ffffff" />
<defs><linearGradient id="tbar" x1="0" y1="0" x2="0" y2="1"><stop offset="0" stop-color="#d2e2f3"/><stop offset="0.5" stop-color="#c2d7ed"/><stop offset="1" stop-color="#bad0e9"/></linearGradient><radialGradient id="tglow" cx="0.5" cy="0.5" r="0.5"><stop offset="0" stop-color="#f4f8fc" stop-opacity="0.95"/><stop offset="0.6" stop-color="#eaf2fa" stop-opacity="0.6"/><stop offset="1" stop-color="#e0ecf8" stop-opacity="0"/></radialGradient><linearGradient id="tbarh" x1="0" y1="0" x2="1" y2="0"><stop offset="0" stop-color="#ffffff" stop-opacity="0"/><stop offset="0.55" stop-color="#ffffff" stop-opacity="0"/><stop offset="0.62" stop-color="#ffffff" stop-opacity="0.18"/><stop offset="0.7" stop-color="#ffffff" stop-opacity="0"/><stop offset="1" stop-color="#ffffff" stop-opacity="0.1"/></linearGradient></defs>
<rect x="82" y="584" width="482" height="299" fill="#c6d8ec" />
<rect x="82" y="584" width="482" height="23" fill="url(#tbar)" />
<rect x="82" y="584" width="482" height="23" fill="url(#tbarh)" />
<clipPath id="tclip"><rect x="83" y="585" width="480" height="21"/></clipPath>
<ellipse cx="118" cy="594" rx="72" ry="15" fill="url(#tglow)" clip-path="url(#tclip)" shape-rendering="geometricPrecision"/>
<rect x="82" y="584" width="482" height="1" fill="#e4eef8"/>
<rect x="82" y="605" width="482" height="1" fill="#d4e3f2"/>
<rect x="82" y="584" width="1" height="299" fill="#dce8f5"/>
<text x="84.2" y="597.5" font-family="Liberation Sans" font-size="12" font-weight="normal" fill="#101010" textLength="60" lengthAdjust="spacingAndGlyphs" >Test results</text>
<rect x="562" y="584" width="1" height="14" fill="#2a2a2a"/>
<rect x="83" y="607" width="481" height="1" fill="#6e7f93"/>
<rect x="83" y="607" width="1" height="270" fill="#6e7f93"/>
<rect x="84" y="608" width="480" height="268" fill="#f0f0f0" />
<rect x="83" y="876" width="481" height="1" fill="#7d8ea2"/>
<rect x="82" y="877" width="482" height="6" fill="#c2d8ee" />
<rect x="82" y="882" width="482" height="1" fill="#5a92a6"/>
<text x="210.3" y="626" font-family="Liberation Sans" font-size="12" font-weight="normal" fill="#000" textLength="38.7" lengthAdjust="spacingAndGlyphs" text-anchor="end" >Device:</text>
<text x="209.8" y="658" font-family="Liberation Sans" font-size="12" font-weight="normal" fill="#000" textLength="74.1" lengthAdjust="spacingAndGlyphs" text-anchor="end" >Sampling mode:</text>
<text x="96.6" y="679.0" font-family="Liberation Sans" font-size="12" font-weight="normal" fill="#000" textLength="113.9" lengthAdjust="spacingAndGlyphs" >Frequency response, dB</text>
<text x="96.6" y="700.1" font-family="Liberation Sans" font-size="12" font-weight="normal" fill="#000" textLength="78.0" lengthAdjust="spacingAndGlyphs" >Noise level, dBA</text>
<text x="96.6" y="725.5" font-family="Liberation Sans" font-size="12" font-weight="normal" fill="#000" textLength="96.8" lengthAdjust="spacingAndGlyphs" >Dynamic range, dBA</text>
<text x="96.6" y="746.8" font-family="Liberation Sans" font-size="12" font-weight="normal" fill="#000" textLength="37.0" lengthAdjust="spacingAndGlyphs" >THD, %</text>
<text x="96.6" y="769.8" font-family="Liberation Sans" font-size="12" font-weight="normal" fill="#000" textLength="73.4" lengthAdjust="spacingAndGlyphs" >IMD + Noise, %</text>
<text x="96.6" y="790.3" font-family="Liberation Sans" font-size="12" font-weight="normal" fill="#000" textLength="94.3" lengthAdjust="spacingAndGlyphs" >Stereo crosstalk, dB</text>
<text x="96.6" y="811.8" font-family="Liberation Sans" font-size="12" font-weight="normal" fill="#000" textLength="108.9" lengthAdjust="spacingAndGlyphs" >IMD+N (swept freq.), %</text>
<clipPath id="dlgclip"><rect x="84" y="608" width="480" height="268"/></clipPath>
<g clip-path="url(#dlgclip)">
<rect x="217" y="611" width="85" height="32" fill="#ffffff" />
<rect x="217" y="611" width="85" height="1" fill="#a0a0a0"/>
<rect x="217" y="612" width="85" height="1" fill="#6a6a6a"/>
<rect x="217" y="611" width="1" height="32" fill="#a0a0a0"/>
<rect x="218" y="612" width="1" height="31" fill="#6a6a6a"/>
<rect x="217" y="642" width="85" height="1" fill="#f8f8f8"/>
<text x="260.5" y="625.3" font-family="Liberation Sans" font-size="12" font-weight="normal" fill="#000" textLength="67.4" lengthAdjust="spacingAndGlyphs" text-anchor="middle" >Wave mapper</text>
<text x="259.5" y="658" font-family="Liberation Sans" font-size="12" font-weight="normal" fill="#000" textLength="66.5" lengthAdjust="spacingAndGlyphs" text-anchor="middle" >24-bit, 96 kHz</text>
<rect x="222" y="668" width="74" height="15" fill="#f0f0f0" />
<rect x="222" y="668" width="74" height="1" fill="#a0a0a0"/>
<rect x="222" y="668" width="1" height="15" fill="#a0a0a0"/>
<rect x="222" y="682" width="74" height="1" fill="#ffffff"/>
<rect x="295" y="668" width="1" height="15" fill="#ffffff"/>
<text x="259.5" y="679.9" font-family="Liberation Sans" font-size="12" font-weight="normal" fill="#000" textLength="56.5" lengthAdjust="spacingAndGlyphs" text-anchor="middle" >+0.94, -1.21</text>
<rect x="222" y="689" width="74" height="15" fill="#f0f0f0" />
<rect x="222" y="689" width="74" height="1" fill="#a0a0a0"/>
<rect x="222" y="689" width="1" height="15" fill="#a0a0a0"/>
<rect x="222" y="703" width="74" height="1" fill="#ffffff"/>
<rect x="295" y="689" width="1" height="15" fill="#ffffff"/>
<text x="259.5" y="700.9" font-family="Liberation Sans" font-size="12" font-weight="normal" fill="#000" textLength="24.5" lengthAdjust="spacingAndGlyphs" text-anchor="middle" >-81.7</text>
<rect x="222" y="714" width="74" height="15" fill="#f0f0f0" />
<rect x="222" y="714" width="74" height="1" fill="#a0a0a0"/>
<rect x="222" y="714" width="1" height="15" fill="#a0a0a0"/>
<rect x="222" y="728" width="74" height="1" fill="#ffffff"/>
<rect x="295" y="714" width="1" height="15" fill="#ffffff"/>
<text x="259.5" y="725.9" font-family="Liberation Sans" font-size="12" font-weight="normal" fill="#000" textLength="20.5" lengthAdjust="spacingAndGlyphs" text-anchor="middle" >81.3</text>
<rect x="222" y="737" width="74" height="15" fill="#f0f0f0" />
<rect x="222" y="737" width="74" height="1" fill="#a0a0a0"/>
<rect x="222" y="737" width="1" height="15" fill="#a0a0a0"/>
<rect x="222" y="751" width="74" height="1" fill="#ffffff"/>
<rect x="295" y="737" width="1" height="15" fill="#ffffff"/>
<text x="259.5" y="748.9" font-family="Liberation Sans" font-size="12" font-weight="normal" fill="#000" textLength="32.5" lengthAdjust="spacingAndGlyphs" text-anchor="middle" >0.0048</text>
<rect x="222" y="759" width="74" height="15" fill="#f0f0f0" />
<rect x="222" y="759" width="74" height="1" fill="#a0a0a0"/>
<rect x="222" y="759" width="1" height="15" fill="#a0a0a0"/>
<rect x="222" y="773" width="74" height="1" fill="#ffffff"/>
<rect x="295" y="759" width="1" height="15" fill="#ffffff"/>
<text x="259.5" y="770.9" font-family="Liberation Sans" font-size="12" font-weight="normal" fill="#000" textLength="26.5" lengthAdjust="spacingAndGlyphs" text-anchor="middle" >0.042</text>
<rect x="222" y="780" width="74" height="15" fill="#f0f0f0" />
<rect x="222" y="780" width="74" height="1" fill="#a0a0a0"/>
<rect x="222" y="780" width="1" height="15" fill="#a0a0a0"/>
<rect x="222" y="794" width="74" height="1" fill="#ffffff"/>
<rect x="295" y="780" width="1" height="15" fill="#ffffff"/>
<text x="259.5" y="791.9" font-family="Liberation Sans" font-size="12" font-weight="normal" fill="#000" textLength="24.5" lengthAdjust="spacingAndGlyphs" text-anchor="middle" >-73.1</text>
<rect x="222" y="801" width="74" height="15" fill="#f0f0f0" />
<rect x="222" y="801" width="74" height="1" fill="#a0a0a0"/>
<rect x="222" y="801" width="1" height="15" fill="#a0a0a0"/>
<rect x="222" y="815" width="74" height="1" fill="#ffffff"/>
<rect x="295" y="801" width="1" height="15" fill="#ffffff"/>
<text x="259.5" y="812.9" font-family="Liberation Sans" font-size="12" font-weight="normal" fill="#000" textLength="26.5" lengthAdjust="spacingAndGlyphs" text-anchor="middle" >0.026</text>
<rect x="234" y="830" width="13" height="13" fill="#ffffff" />
<rect x="234" y="830" width="13" height="1" fill="#8a8a8a"/>
<rect x="234" y="830" width="1" height="13" fill="#8a8a8a"/>
<rect x="235" y="831" width="11" height="1" fill="#c8c8c8"/>
<rect x="235" y="831" width="1" height="11" fill="#c8c8c8"/>
<polyline points="237,836.5 239.5,839.5 244,833.5" fill="none" stroke="#000" stroke-width="2.2"/>
<text x="252.5" y="840.6" font-family="Liberation Sans" font-size="12" font-weight="normal" fill="#000" textLength="29.9" lengthAdjust="spacingAndGlyphs" >Select</text>
<rect x="306" y="611" width="85" height="32" fill="#ffffff" />
<rect x="306" y="611" width="85" height="1" fill="#a0a0a0"/>
<rect x="306" y="612" width="85" height="1" fill="#6a6a6a"/>
<rect x="306" y="611" width="1" height="32" fill="#a0a0a0"/>
<rect x="307" y="612" width="1" height="31" fill="#6a6a6a"/>
<rect x="306" y="642" width="85" height="1" fill="#f8f8f8"/>
<text x="349.5" y="625.3" font-family="Liberation Sans" font-size="12" font-weight="normal" fill="#000" textLength="67.4" lengthAdjust="spacingAndGlyphs" text-anchor="middle" >Wave mapper</text>
<text x="348.17" y="658" font-family="Liberation Sans" font-size="12" font-weight="normal" fill="#000" textLength="66.5" lengthAdjust="spacingAndGlyphs" text-anchor="middle" >24-bit, 96 kHz</text>
<rect x="311" y="668" width="74" height="15" fill="#f0f0f0" />
<rect x="311" y="668" width="74" height="1" fill="#a0a0a0"/>
<rect x="311" y="668" width="1" height="15" fill="#a0a0a0"/>
<rect x="311" y="682" width="74" height="1" fill="#ffffff"/>
<rect x="384" y="668" width="1" height="15" fill="#ffffff"/>
<text x="348.5" y="679.9" font-family="Liberation Sans" font-size="12" font-weight="normal" fill="#000" textLength="56.5" lengthAdjust="spacingAndGlyphs" text-anchor="middle" >+0.43, -0.18</text>
<rect x="311" y="689" width="74" height="15" fill="#f0f0f0" />
<rect x="311" y="689" width="74" height="1" fill="#a0a0a0"/>
<rect x="311" y="689" width="1" height="15" fill="#a0a0a0"/>
<rect x="311" y="703" width="74" height="1" fill="#ffffff"/>
<rect x="384" y="689" width="1" height="15" fill="#ffffff"/>
<text x="348.5" y="700.9" font-family="Liberation Sans" font-size="12" font-weight="normal" fill="#000" textLength="24.5" lengthAdjust="spacingAndGlyphs" text-anchor="middle" >-81.9</text>
<rect x="311" y="714" width="74" height="15" fill="#f0f0f0" />
<rect x="311" y="714" width="74" height="1" fill="#a0a0a0"/>
<rect x="311" y="714" width="1" height="15" fill="#a0a0a0"/>
<rect x="311" y="728" width="74" height="1" fill="#ffffff"/>
<rect x="384" y="714" width="1" height="15" fill="#ffffff"/>
<text x="348.5" y="725.9" font-family="Liberation Sans" font-size="12" font-weight="normal" fill="#000" textLength="20.5" lengthAdjust="spacingAndGlyphs" text-anchor="middle" >81.0</text>
<rect x="311" y="737" width="74" height="15" fill="#f0f0f0" />
<rect x="311" y="737" width="74" height="1" fill="#a0a0a0"/>
<rect x="311" y="737" width="1" height="15" fill="#a0a0a0"/>
<rect x="311" y="751" width="74" height="1" fill="#ffffff"/>
<rect x="384" y="737" width="1" height="15" fill="#ffffff"/>
<text x="348.5" y="748.9" font-family="Liberation Sans" font-size="12" font-weight="normal" fill="#000" textLength="32.5" lengthAdjust="spacingAndGlyphs" text-anchor="middle" >0.0053</text>
<rect x="311" y="759" width="74" height="15" fill="#f0f0f0" />
<rect x="311" y="759" width="74" height="1" fill="#a0a0a0"/>
<rect x="311" y="759" width="1" height="15" fill="#a0a0a0"/>
<rect x="311" y="773" width="74" height="1" fill="#ffffff"/>
<rect x="384" y="759" width="1" height="15" fill="#ffffff"/>
<text x="348.5" y="770.9" font-family="Liberation Sans" font-size="12" font-weight="normal" fill="#000" textLength="26.5" lengthAdjust="spacingAndGlyphs" text-anchor="middle" >0.042</text>
<rect x="311" y="780" width="74" height="15" fill="#f0f0f0" />
<rect x="311" y="780" width="74" height="1" fill="#a0a0a0"/>
<rect x="311" y="780" width="1" height="15" fill="#a0a0a0"/>
<rect x="311" y="794" width="74" height="1" fill="#ffffff"/>
<rect x="384" y="780" width="1" height="15" fill="#ffffff"/>
<text x="348.5" y="791.9" font-family="Liberation Sans" font-size="12" font-weight="normal" fill="#000" textLength="24.5" lengthAdjust="spacingAndGlyphs" text-anchor="middle" >-73.2</text>
<rect x="311" y="801" width="74" height="15" fill="#f0f0f0" />
<rect x="311" y="801" width="74" height="1" fill="#a0a0a0"/>
<rect x="311" y="801" width="1" height="15" fill="#a0a0a0"/>
<rect x="311" y="815" width="74" height="1" fill="#ffffff"/>
<rect x="384" y="801" width="1" height="15" fill="#ffffff"/>
<text x="348.5" y="812.9" font-family="Liberation Sans" font-size="12" font-weight="normal" fill="#000" textLength="26.5" lengthAdjust="spacingAndGlyphs" text-anchor="middle" >0.026</text>
<rect x="323" y="830" width="13" height="13" fill="#ffffff" />
<rect x="323" y="830" width="13" height="1" fill="#8a8a8a"/>
<rect x="323" y="830" width="1" height="13" fill="#8a8a8a"/>
<rect x="324" y="831" width="11" height="1" fill="#c8c8c8"/>
<rect x="324" y="831" width="1" height="11" fill="#c8c8c8"/>
<polyline points="326,836.5 328.5,839.5 333,833.5" fill="none" stroke="#000" stroke-width="2.2"/>
<text x="341.17" y="840.6" font-family="Liberation Sans" font-size="12" font-weight="normal" fill="#000" textLength="29.9" lengthAdjust="spacingAndGlyphs" >Select</text>
<rect x="394" y="611" width="85" height="32" fill="#ffffff" />
<rect x="394" y="611" width="85" height="1" fill="#a0a0a0"/>
<rect x="394" y="612" width="85" height="1" fill="#6a6a6a"/>
<rect x="394" y="611" width="1" height="32" fill="#a0a0a0"/>
<rect x="395" y="612" width="1" height="31" fill="#6a6a6a"/>
<rect x="394" y="642" width="85" height="1" fill="#f8f8f8"/>
<text x="437.5" y="625.3" font-family="Liberation Sans" font-size="12" font-weight="normal" fill="#000" textLength="67.4" lengthAdjust="spacingAndGlyphs" text-anchor="middle" >Wave mapper</text>
<text x="436.84000000000003" y="658" font-family="Liberation Sans" font-size="12" font-weight="normal" fill="#000" textLength="66.5" lengthAdjust="spacingAndGlyphs" text-anchor="middle" >24-bit, 96 kHz</text>
<rect x="399" y="668" width="74" height="15" fill="#f0f0f0" />
<rect x="399" y="668" width="74" height="1" fill="#a0a0a0"/>
<rect x="399" y="668" width="1" height="15" fill="#a0a0a0"/>
<rect x="399" y="682" width="74" height="1" fill="#ffffff"/>
<rect x="472" y="668" width="1" height="15" fill="#ffffff"/>
<text x="436.5" y="679.9" font-family="Liberation Sans" font-size="12" font-weight="normal" fill="#000" textLength="56.5" lengthAdjust="spacingAndGlyphs" text-anchor="middle" >+2.07, -0.65</text>
<rect x="399" y="689" width="74" height="15" fill="#f0f0f0" />
<rect x="399" y="689" width="74" height="1" fill="#a0a0a0"/>
<rect x="399" y="689" width="1" height="15" fill="#a0a0a0"/>
<rect x="399" y="703" width="74" height="1" fill="#ffffff"/>
<rect x="472" y="689" width="1" height="15" fill="#ffffff"/>
<text x="436.5" y="700.9" font-family="Liberation Sans" font-size="12" font-weight="normal" fill="#000" textLength="24.5" lengthAdjust="spacingAndGlyphs" text-anchor="middle" >-83.4</text>
<rect x="399" y="714" width="74" height="15" fill="#f0f0f0" />
<rect x="399" y="714" width="74" height="1" fill="#a0a0a0"/>
<rect x="399" y="714" width="1" height="15" fill="#a0a0a0"/>
<rect x="399" y="728" width="74" height="1" fill="#ffffff"/>
<rect x="472" y="714" width="1" height="15" fill="#ffffff"/>
<text x="436.5" y="725.9" font-family="Liberation Sans" font-size="12" font-weight="normal" fill="#000" textLength="20.5" lengthAdjust="spacingAndGlyphs" text-anchor="middle" >83.1</text>
<rect x="399" y="737" width="74" height="15" fill="#f0f0f0" />
<rect x="399" y="737" width="74" height="1" fill="#a0a0a0"/>
<rect x="399" y="737" width="1" height="15" fill="#a0a0a0"/>
<rect x="399" y="751" width="74" height="1" fill="#ffffff"/>
<rect x="472" y="737" width="1" height="15" fill="#ffffff"/>
<text x="436.5" y="748.9" font-family="Liberation Sans" font-size="12" font-weight="normal" fill="#000" textLength="32.5" lengthAdjust="spacingAndGlyphs" text-anchor="middle" >0.0048</text>
<rect x="399" y="759" width="74" height="15" fill="#f0f0f0" />
<rect x="399" y="759" width="74" height="1" fill="#a0a0a0"/>
<rect x="399" y="759" width="1" height="15" fill="#a0a0a0"/>
<rect x="399" y="773" width="74" height="1" fill="#ffffff"/>
<rect x="472" y="759" width="1" height="15" fill="#ffffff"/>
<text x="436.5" y="770.9" font-family="Liberation Sans" font-size="12" font-weight="normal" fill="#000" textLength="26.5" lengthAdjust="spacingAndGlyphs" text-anchor="middle" >0.042</text>
<rect x="399" y="780" width="74" height="15" fill="#f0f0f0" />
<rect x="399" y="780" width="74" height="1" fill="#a0a0a0"/>
<rect x="399" y="780" width="1" height="15" fill="#a0a0a0"/>
<rect x="399" y="794" width="74" height="1" fill="#ffffff"/>
<rect x="472" y="780" width="1" height="15" fill="#ffffff"/>
<text x="436.5" y="791.9" font-family="Liberation Sans" font-size="12" font-weight="normal" fill="#000" textLength="24.5" lengthAdjust="spacingAndGlyphs" text-anchor="middle" >-75.3</text>
<rect x="399" y="801" width="74" height="15" fill="#f0f0f0" />
<rect x="399" y="801" width="74" height="1" fill="#a0a0a0"/>
<rect x="399" y="801" width="1" height="15" fill="#a0a0a0"/>
<rect x="399" y="815" width="74" height="1" fill="#ffffff"/>
<rect x="472" y="801" width="1" height="15" fill="#ffffff"/>
<text x="436.5" y="812.9" font-family="Liberation Sans" font-size="12" font-weight="normal" fill="#000" textLength="26.5" lengthAdjust="spacingAndGlyphs" text-anchor="middle" >0.025</text>
<rect x="411" y="830" width="13" height="13" fill="#ffffff" />
<rect x="411" y="830" width="13" height="1" fill="#8a8a8a"/>
<rect x="411" y="830" width="1" height="13" fill="#8a8a8a"/>
<rect x="412" y="831" width="11" height="1" fill="#c8c8c8"/>
<rect x="412" y="831" width="1" height="11" fill="#c8c8c8"/>
<polyline points="414,836.5 416.5,839.5 421,833.5" fill="none" stroke="#000" stroke-width="2.2"/>
<text x="429.84000000000003" y="840.6" font-family="Liberation Sans" font-size="12" font-weight="normal" fill="#000" textLength="29.9" lengthAdjust="spacingAndGlyphs" >Select</text>
<rect x="483" y="611" width="85" height="32" fill="#ffffff" />
<rect x="483" y="611" width="85" height="1" fill="#a0a0a0"/>
<rect x="483" y="612" width="85" height="1" fill="#6a6a6a"/>
<rect x="483" y="611" width="1" height="32" fill="#a0a0a0"/>
<rect x="484" y="612" width="1" height="31" fill="#6a6a6a"/>
<rect x="483" y="642" width="85" height="1" fill="#f8f8f8"/>
<text x="526.5" y="625.3" font-family="Liberation Sans" font-size="12" font-weight="normal" fill="#000" textLength="67.4" lengthAdjust="spacingAndGlyphs" text-anchor="middle" >Wave mapper</text>
<text x="525.51" y="658" font-family="Liberation Sans" font-size="12" font-weight="normal" fill="#000" textLength="66.5" lengthAdjust="spacingAndGlyphs" text-anchor="middle" >24-bit, 96 kHz</text>
<rect x="488" y="668" width="74" height="15" fill="#f0f0f0" />
<rect x="488" y="668" width="74" height="1" fill="#a0a0a0"/>
<rect x="488" y="668" width="1" height="15" fill="#a0a0a0"/>
<rect x="488" y="682" width="74" height="1" fill="#ffffff"/>
<rect x="561" y="668" width="1" height="15" fill="#ffffff"/>
<text x="525.5" y="679.9" font-family="Liberation Sans" font-size="12" font-weight="normal" fill="#000" textLength="56.5" lengthAdjust="spacingAndGlyphs" text-anchor="middle" >+4.94, -1.15</text>
<rect x="488" y="689" width="74" height="15" fill="#f0f0f0" />
<rect x="488" y="689" width="74" height="1" fill="#a0a0a0"/>
<rect x="488" y="689" width="1" height="15" fill="#a0a0a0"/>
<rect x="488" y="703" width="74" height="1" fill="#ffffff"/>
<rect x="561" y="689" width="1" height="15" fill="#ffffff"/>
<text x="525.5" y="700.9" font-family="Liberation Sans" font-size="12" font-weight="normal" fill="#000" textLength="24.5" lengthAdjust="spacingAndGlyphs" text-anchor="middle" >-85.5</text>
<rect x="488" y="714" width="74" height="15" fill="#f0f0f0" />
<rect x="488" y="714" width="74" height="1" fill="#a0a0a0"/>
<rect x="488" y="714" width="1" height="15" fill="#a0a0a0"/>
<rect x="488" y="728" width="74" height="1" fill="#ffffff"/>
<rect x="561" y="714" width="1" height="15" fill="#ffffff"/>
<text x="525.5" y="725.9" font-family="Liberation Sans" font-size="12" font-weight="normal" fill="#000" textLength="20.5" lengthAdjust="spacingAndGlyphs" text-anchor="middle" >84.9</text>
<rect x="488" y="737" width="74" height="15" fill="#f0f0f0" />
<rect x="488" y="737" width="74" height="1" fill="#a0a0a0"/>
<rect x="488" y="737" width="1" height="15" fill="#a0a0a0"/>
<rect x="488" y="751" width="74" height="1" fill="#ffffff"/>
<rect x="561" y="737" width="1" height="15" fill="#ffffff"/>
<text x="525.5" y="748.9" font-family="Liberation Sans" font-size="12" font-weight="normal" fill="#000" textLength="32.5" lengthAdjust="spacingAndGlyphs" text-anchor="middle" >0.0052</text>
<rect x="488" y="759" width="74" height="15" fill="#f0f0f0" />
<rect x="488" y="759" width="74" height="1" fill="#a0a0a0"/>
<rect x="488" y="759" width="1" height="15" fill="#a0a0a0"/>
<rect x="488" y="773" width="74" height="1" fill="#ffffff"/>
<rect x="561" y="759" width="1" height="15" fill="#ffffff"/>
<text x="525.5" y="770.9" font-family="Liberation Sans" font-size="12" font-weight="normal" fill="#000" textLength="26.5" lengthAdjust="spacingAndGlyphs" text-anchor="middle" >0.042</text>
<rect x="488" y="780" width="74" height="15" fill="#f0f0f0" />
<rect x="488" y="780" width="74" height="1" fill="#a0a0a0"/>
<rect x="488" y="780" width="1" height="15" fill="#a0a0a0"/>
<rect x="488" y="794" width="74" height="1" fill="#ffffff"/>
<rect x="561" y="780" width="1" height="15" fill="#ffffff"/>
<text x="525.5" y="791.9" font-family="Liberation Sans" font-size="12" font-weight="normal" fill="#000" textLength="24.5" lengthAdjust="spacingAndGlyphs" text-anchor="middle" >-77.3</text>
<rect x="488" y="801" width="74" height="15" fill="#f0f0f0" />
<rect x="488" y="801" width="74" height="1" fill="#a0a0a0"/>
<rect x="488" y="801" width="1" height="15" fill="#a0a0a0"/>
<rect x="488" y="815" width="74" height="1" fill="#ffffff"/>
<rect x="561" y="801" width="1" height="15" fill="#ffffff"/>
<text x="525.5" y="812.9" font-family="Liberation Sans" font-size="12" font-weight="normal" fill="#000" textLength="26.5" lengthAdjust="spacingAndGlyphs" text-anchor="middle" >0.026</text>
<rect x="500" y="830" width="13" height="13" fill="#ffffff" />
<rect x="500" y="830" width="13" height="1" fill="#8a8a8a"/>
<rect x="500" y="830" width="1" height="13" fill="#8a8a8a"/>
<rect x="501" y="831" width="11" height="1" fill="#c8c8c8"/>
<rect x="501" y="831" width="1" height="11" fill="#c8c8c8"/>
<polyline points="503,836.5 505.5,839.5 510,833.5" fill="none" stroke="#000" stroke-width="2.2"/>
<text x="518.51" y="840.6" font-family="Liberation Sans" font-size="12" font-weight="normal" fill="#000" textLength="29.9" lengthAdjust="spacingAndGlyphs" >Select</text>
<rect x="93" y="841" width="29" height="28" fill="#f0f0f0" />
<rect x="93" y="841" width="29" height="1" fill="#ffffff"/>
<rect x="93" y="841" width="1" height="28" fill="#ffffff"/>
<rect x="93" y="868" width="29" height="1" fill="#a0a0a0"/>
<rect x="121" y="841" width="1" height="28" fill="#a0a0a0"/>
<rect x="94" y="867" width="27" height="1" fill="#d4d4d4"/>
<rect x="120" y="842" width="1" height="26" fill="#d4d4d4"/>
<rect x="123" y="841" width="29" height="28" fill="#f0f0f0" />
<rect x="123" y="841" width="29" height="1" fill="#ffffff"/>
<rect x="123" y="841" width="1" height="28" fill="#ffffff"/>
<rect x="123" y="868" width="29" height="1" fill="#a0a0a0"/>
<rect x="151" y="841" width="1" height="28" fill="#a0a0a0"/>
<rect x="124" y="867" width="27" height="1" fill="#d4d4d4"/>
<rect x="150" y="842" width="1" height="26" fill="#d4d4d4"/>
<rect x="153" y="841" width="29" height="28" fill="#f0f0f0" />
<rect x="153" y="841" width="29" height="1" fill="#ffffff"/>
<rect x="153" y="841" width="1" height="28" fill="#ffffff"/>
<rect x="153" y="868" width="29" height="1" fill="#a0a0a0"/>
<rect x="181" y="841" width="1" height="28" fill="#a0a0a0"/>
<rect x="154" y="867" width="27" height="1" fill="#d4d4d4"/>
<rect x="180" y="842" width="1" height="26" fill="#d4d4d4"/>
<rect x="183" y="841" width="29" height="28" fill="#f0f0f0" />
<rect x="183" y="841" width="29" height="1" fill="#ffffff"/>
<rect x="183" y="841" width="1" height="28" fill="#ffffff"/>
<rect x="183" y="868" width="29" height="1" fill="#a0a0a0"/>
<rect x="211" y="841" width="1" height="28" fill="#a0a0a0"/>
<rect x="184" y="867" width="27" height="1" fill="#d4d4d4"/>
<rect x="210" y="842" width="1" height="26" fill="#d4d4d4"/>
<path d="M95.5,864.5 L95.5,849.5 L100,849.5 L101.5,851 L111.5,851 L111.5,855.5" fill="#f4f47c" stroke="#000" stroke-width="1"/>
<path d="M95.5,864.5 L101,855.5 L119,855.5 L110,864.5 Z" fill="#80801a" stroke="#000" stroke-width="1"/>
<path d="M107.5,848 Q111,843 116,846.5" fill="none" stroke="#000" stroke-width="1.2"/>
<polygon points="114,848.5 119,849.5 117.5,845" fill="#000" shape-rendering="geometricPrecision"/>
<rect x="127" y="844" width="20" height="20" fill="#000" />
<rect x="128" y="845" width="18" height="18" fill="#84841c" />
<rect x="131" y="845" width="12" height="10" fill="#e6e6e6" />
<rect x="131" y="858" width="12" height="5" fill="#000" />
<rect x="139" y="858.5" width="3" height="4.5" fill="#ffffff" />
<rect x="144" y="846" width="1.5" height="1.5" fill="#e6e6e6" />
<path d="M159.5,846.5 L177.5,846.5 L177.5,858 L171,858 L167,863.5 L159.5,863.5 Z" fill="#fff" stroke="#000" stroke-width="1.2"/>
<path d="M155.5,845.5 L163,845.5 L163,861.5 L155.5,861.5 Z" fill="#fff" stroke="#000" stroke-width="1.2"/>
<path d="M160,850 Q160,843 164,843 Q168,843 168,850 L168,861 Q164,864 161,861" fill="none" stroke="#000" stroke-width="1.3"/>
<rect x="163" y="852" width="14" height="1" fill="#9a9a9a"/>
<rect x="187" y="852" width="20" height="4" fill="#000" />
<rect x="222" y="853" width="342" height="18" fill="#f0f0f0" />
<rect x="222" y="853" width="342" height="1" fill="#a0a0a0"/>
<rect x="222" y="853" width="1" height="18" fill="#a0a0a0"/>
<text x="226.5" y="864.6" font-family="Liberation Sans" font-size="12" font-weight="normal" fill="#000" textLength="294.4" lengthAdjust="spacingAndGlyphs" >HINT: Right-click on result boxes to view the detailed reports...</text>
</g>
<rect x="564" y="530" width="513" height="381" fill="#c8daee" />
<rect x="564" y="530" width="4" height="381" fill="#d6e4f3" />
<rect x="564" y="530" width="513" height="4" fill="#d2e1f1" />
<rect x="567" y="534" width="510" height="1" fill="#6e7f93"/>
<rect x="567" y="534" width="1" height="372" fill="#6e7f93"/>
<rect x="568" y="535" width="509" height="370" fill="#f0f0f0" />
<rect x="567" y="905" width="510" height="1" fill="#6e7f93"/>
<rect x="568" y="535" width="509" height="1" fill="#ffffff"/>
<rect x="568" y="536" width="509" height="1" fill="#fbfbfb"/>
<rect x="568" y="535" width="1" height="338" fill="#ffffff"/>
<rect x="569" y="535" width="1" height="338" fill="#fbfbfb"/>
<rect x="570" y="537" width="507" height="318" fill="#d6d6d6" />
<rect x="570" y="537" width="507" height="1" fill="#c8c2bc"/>
<rect x="570" y="537" width="1" height="336" fill="#c8c2bc"/>
<rect x="571" y="538" width="2" height="317" fill="#dedede" />
<rect x="573" y="540" width="475" height="298" fill="#000" />
<rect x="1048" y="540" width="1" height="299" fill="#ffffff"/>
<rect x="573" y="838" width="476" height="1" fill="#ffffff"/>
<rect x="576" y="540" width="1" height="298" fill="#7c7c7c"/>
<rect x="604" y="540" width="1" height="298" fill="#7c7c7c"/>
<rect x="623" y="540" width="1" height="298" fill="#7c7c7c"/>
<rect x="638" y="540" width="1" height="298" fill="#7c7c7c"/>
<rect x="651" y="540" width="1" height="298" fill="#7c7c7c"/>
<rect x="661" y="540" width="1" height="298" fill="#7c7c7c"/>
<rect x="670" y="540" width="1" height="298" fill="#7c7c7c"/>
<rect x="678" y="540" width="1" height="298" fill="#7c7c7c"/>
<rect x="685" y="540" width="1" height="298" fill="#7c7c7c"/>
<rect x="732" y="540" width="1" height="298" fill="#7c7c7c"/>
<rect x="759" y="540" width="1" height="298" fill="#7c7c7c"/>
<rect x="778" y="540" width="1" height="298" fill="#7c7c7c"/>
<rect x="793" y="540" width="1" height="298" fill="#7c7c7c"/>
<rect x="806" y="540" width="1" height="298" fill="#7c7c7c"/>
<rect x="816" y="540" width="1" height="298" fill="#7c7c7c"/>
<rect x="825" y="540" width="1" height="298" fill="#7c7c7c"/>
<rect x="833" y="540" width="1" height="298" fill="#7c7c7c"/>
<rect x="840" y="540" width="1" height="298" fill="#7c7c7c"/>
<rect x="887" y="540" width="1" height="298" fill="#7c7c7c"/>
<rect x="914" y="540" width="1" height="298" fill="#7c7c7c"/>
<rect x="934" y="540" width="1" height="298" fill="#7c7c7c"/>
<rect x="949" y="540" width="1" height="298" fill="#7c7c7c"/>
<rect x="961" y="540" width="1" height="298" fill="#7c7c7c"/>
<rect x="971" y="540" width="1" height="298" fill="#7c7c7c"/>
<rect x="980" y="540" width="1" height="298" fill="#7c7c7c"/>
<rect x="988" y="540" width="1" height="298" fill="#7c7c7c"/>
<rect x="995" y="540" width="1" height="298" fill="#7c7c7c"/>
<rect x="1042" y="540" width="1" height="298" fill="#7c7c7c"/>
<rect x="573" y="552" width="475" height="1" fill="#7c7c7c"/>
<rect x="573" y="571" width="475" height="1" fill="#7c7c7c"/>
<rect x="573" y="591" width="475" height="1" fill="#7c7c7c"/>
<rect x="573" y="611" width="475" height="1" fill="#7c7c7c"/>
<rect x="573" y="631" width="475" height="1" fill="#7c7c7c"/>
<rect x="573" y="651" width="475" height="1" fill="#7c7c7c"/>
<rect x="573" y="670" width="475" height="1" fill="#7c7c7c"/>
<rect x="573" y="690" width="475" height="1" fill="#7c7c7c"/>
<rect x="573" y="710" width="475" height="1" fill="#7c7c7c"/>
<rect x="573" y="730" width="475" height="1" fill="#7c7c7c"/>
<rect x="573" y="750" width="475" height="1" fill="#7c7c7c"/>
<rect x="573" y="769" width="475" height="1" fill="#7c7c7c"/>
<rect x="573" y="789" width="475" height="1" fill="#7c7c7c"/>
<rect x="573" y="809" width="475" height="1" fill="#7c7c7c"/>
<rect x="573" y="829" width="475" height="1" fill="#7c7c7c"/>
<clipPath id="specclip"><rect x="573" y="540" width="475" height="298"/></clipPath>
<polyline points="573.5,757.2 574.5,757.5 575.5,757.7 576.5,758.0 577.5,758.3 578.5,758.6 579.5,758.8 580.5,759.1 581.5,759.4 582.5,759.6 583.5,759.9 584.5,760.2 585.5,760.5 586.5,760.7 587.5,761.0 588.5,761.3 589.5,761.5 590.5,761.8 591.5,762.1 592.5,762.3 593.5,762.6 594.5,762.9 595.5,763.2 596.5,763.4 597.5,763.7 598.5,764.0 599.5,764.2 600.5,764.5 601.5,764.8 602.5,765.1 603.5,765.3 604.5,765.6 605.5,765.4 606.5,765.3 607.5,765.1 608.5,765.0 609.5,764.8 610.5,764.7 611.5,764.5 612.5,764.4 613.5,764.2 614.5,764.1 615.5,763.9 616.5,763.8 617.5,763.6 618.5,763.5 619.5,763.3 620.5,763.1 621.5,762.9 622.5,762.6 623.5,762.4 624.5,762.1 625.5,761.7 626.5,760.9 627.5,759.7 628.5,758.1 629.5,755.8 630.5,752.9 631.5,749.3 632.5,745.2 633.5,740.8 634.5,736.3 635.5,732.1 636.5,728.5 637.5,726.0 638.5,724.9 639.5,725.1 640.5,726.8 641.5,729.9 642.5,733.9 643.5,738.6 644.5,743.4 645.5,748.2 646.5,752.5 647.5,756.3 648.5,759.4 649.5,761.9 650.5,763.8 651.5,765.2 652.5,766.2 653.5,766.9 654.5,767.5 655.5,767.9 656.5,768.2 657.5,768.5 658.5,768.7 659.5,768.9 660.5,769.1 661.5,769.3 662.5,769.5 663.5,769.7 664.5,770.0 665.5,770.2 666.5,770.4 667.5,770.6 668.5,770.8 669.5,771.0 670.5,771.2 671.5,771.4 672.5,771.6 673.5,771.8 674.5,772.0 675.5,772.2 676.5,772.2 677.5,772.2 678.5,771.7 679.5,770.5 680.5,767.7 681.5,762.6 682.5,755.0 683.5,746.0 684.5,737.8 685.5,733.5 686.5,734.7 687.5,741.1 688.5,750.2 689.5,759.1 690.5,765.9 691.5,770.2 692.5,772.5 693.5,773.6 694.5,774.2 695.5,774.6 696.5,774.9 697.5,775.2 698.5,775.5 699.5,775.8 700.5,776.1 701.5,776.4 702.5,776.7 703.5,777.0 704.5,777.3 705.5,777.6 706.5,777.9 707.5,778.2 708.5,778.4 709.5,778.2 710.5,777.3 711.5,775.3 712.5,772.7 713.5,770.8 714.5,770.9 715.5,773.2 716.5,776.2 717.5,778.5 718.5,779.7 719.5,780.3 720.5,780.6 721.5,780.6 722.5,780.6 723.5,780.6 724.5,780.6 725.5,780.6 726.5,780.6 727.5,780.6 728.5,780.2 729.5,778.1 730.5,770.7 731.5,757.1 732.5,746.9 733.5,751.7 734.5,765.7 735.5,776.0 736.5,779.3 737.5,779.6 738.5,781.5 739.5,779.7 740.5,781.4 741.5,780.9 742.5,780.0 743.5,781.6 744.5,780.2 745.5,781.6 746.5,780.5 747.5,780.7 748.5,782.0 749.5,783.5 750.5,781.2 751.5,781.7 752.5,783.2 753.5,784.4 754.5,783.3 755.5,782.8 756.5,785.0 757.5,781.9 758.5,784.8 759.5,783.0 760.5,782.7 761.5,782.7 762.5,783.5 763.5,785.4 764.5,783.4 765.5,784.9 766.5,785.2 767.5,784.4 768.5,785.2 769.5,783.7 770.5,783.8 771.5,784.4 772.5,786.2 773.5,785.5 774.5,785.2 775.5,786.3 776.5,785.9 777.5,785.4 778.5,787.1 779.5,786.8 780.5,785.3 781.5,786.5 782.5,786.4 783.5,787.6 784.5,787.2 785.5,785.7 786.5,788.1 787.5,785.2 788.5,786.3 789.5,787.5 790.5,785.5 791.5,786.6 792.5,785.2 793.5,787.3 794.5,787.7 795.5,787.1 796.5,788.2 797.5,786.3 798.5,787.6 799.5,787.3 800.5,787.3 801.5,787.0 802.5,788.3 803.5,788.7 804.5,787.2 805.5,787.8 806.5,785.8 807.5,788.1 808.5,787.9 809.5,789.1 810.5,788.6 811.5,786.8 812.5,787.2 813.5,788.2 814.5,786.0 815.5,787.5 816.5,786.6 817.5,786.4 818.5,786.3 819.5,788.7 820.5,786.6 821.5,787.0 822.5,787.5 823.5,789.2 824.5,786.5 825.5,787.8 826.5,788.2 827.5,789.4 828.5,789.2 829.5,789.4 830.5,787.4 831.5,787.9 832.5,787.7 833.5,789.6 834.5,789.8 835.5,787.1 836.5,787.2 837.5,787.5 838.5,787.5 839.5,788.4 840.5,788.8 841.5,787.7 842.5,786.9 843.5,788.3 844.5,788.2 845.5,788.9 846.5,790.2 847.5,789.4 848.5,788.8 849.5,789.2 850.5,789.4 851.5,787.3 852.5,790.2 853.5,789.9 854.5,790.2 855.5,790.0 856.5,788.6 857.5,788.7 858.5,787.7 859.5,789.6 860.5,787.7 861.5,787.7 862.5,788.2 863.5,788.1 864.5,788.7 865.5,787.8 866.5,787.6 867.5,788.2 868.5,788.1 869.5,789.0 870.5,787.9 871.5,790.8 872.5,789.9 873.5,788.4 874.5,788.8 875.5,789.1 876.5,789.2 877.5,788.4 878.5,790.9 879.5,791.5 880.5,789.7 881.5,789.8 882.5,788.5 883.5,788.6 884.5,789.4 885.5,789.2 886.5,791.1 887.5,788.9 888.5,788.5 889.5,791.7 890.5,790.3 891.5,789.0 892.5,790.4 893.5,788.7 894.5,790.4 895.5,792.0 896.5,791.6 897.5,791.1 898.5,789.6 899.5,790.0 900.5,789.4 901.5,791.5 902.5,790.7 903.5,791.6 904.5,790.1 905.5,789.8 906.5,791.8 907.5,792.4 908.5,792.0 909.5,791.9 910.5,792.0 911.5,791.8 912.5,790.1 913.5,791.1 914.5,790.6 915.5,789.5 916.5,789.5 917.5,790.4 918.5,790.4 919.5,791.9 920.5,792.9 921.5,791.2 922.5,792.9 923.5,793.1 924.5,793.0 925.5,791.0 926.5,790.6 927.5,790.7 928.5,790.6 929.5,790.7 930.5,792.1 931.5,793.1 932.5,792.9 933.5,791.8 934.5,792.4 935.5,792.9 936.5,790.5 937.5,792.5 938.5,793.4 939.5,793.0 940.5,793.0 941.5,792.1 942.5,791.1 943.5,793.2 944.5,791.7 945.5,793.3 946.5,793.9 947.5,792.0 948.5,792.1 949.5,794.0 950.5,793.3 951.5,791.4 952.5,791.3 953.5,791.4 954.5,794.0 955.5,793.7 956.5,791.5 957.5,793.8 958.5,794.4 959.5,793.3 960.5,792.3 961.5,793.0 962.5,791.6 963.5,791.2 964.5,794.5 965.5,793.5 966.5,793.1 967.5,794.5 968.5,792.8 969.5,794.3 970.5,794.2 971.5,792.1 972.5,792.3 973.5,792.5 974.5,792.3 975.5,793.5 976.5,792.5 977.5,793.0 978.5,792.1 979.5,794.8 980.5,792.9 981.5,793.3 982.5,793.7 983.5,794.9 984.5,793.3 985.5,795.0 986.5,793.6 987.5,793.7 988.5,793.7 989.5,792.0 990.5,793.5 991.5,792.7 992.5,792.1 993.5,794.8 994.5,792.7 995.5,793.8 996.5,794.6 997.5,794.1 998.5,793.3 999.5,794.0 1000.5,794.2 1001.5,795.0 1002.5,792.7 1003.5,794.3 1004.5,793.2 1005.5,793.4 1006.5,795.1 1007.5,794.2 1008.5,794.4 1009.5,795.1 1010.5,795.7 1011.5,794.1 1012.5,794.7 1013.5,794.4 1014.5,794.4 1015.5,795.0 1016.5,794.2 1017.5,794.5 1018.5,794.4 1019.5,796.0 1020.5,795.2 1021.5,795.8 1022.5,796.1 1023.5,793.8 1024.5,794.8 1025.5,796.1 1026.5,795.8 1027.5,793.5 1028.5,793.4 1029.5,794.5 1030.5,793.3 1031.5,793.9 1032.5,793.4 1033.5,795.4 1034.5,795.8 1035.5,796.2 1036.5,793.7 1037.5,795.7 1038.5,795.5 1039.5,793.8 1040.5,796.3 1041.5,796.6 1042.5,794.1 1043.5,796.6 1044.5,794.8 1045.5,795.1 1046.5,796.8 1047.5,796.3" fill="none" stroke="#4ce64c" stroke-width="1.4" stroke-linejoin="round" clip-path="url(#specclip)" shape-rendering="geometricPrecision"/>
<polyline points="573.5,761.0 574.5,761.2 575.5,761.3 576.5,761.5 577.5,761.6 578.5,761.8 579.5,762.0 580.5,762.1 581.5,762.3 582.5,762.5 583.5,762.6 584.5,762.8 585.5,762.9 586.5,763.1 587.5,763.3 588.5,763.4 589.5,763.6 590.5,763.7 591.5,763.9 592.5,764.1 593.5,764.2 594.5,764.4 595.5,764.5 596.5,764.7 597.5,764.9 598.5,765.0 599.5,765.2 600.5,765.4 601.5,765.5 602.5,765.7 603.5,765.8 604.5,766.0 605.5,766.0 606.5,765.9 607.5,765.9 608.5,765.9 609.5,765.9 610.5,765.8 611.5,765.8 612.5,765.8 613.5,765.7 614.5,765.7 615.5,765.7 616.5,765.7 617.5,765.6 618.5,765.6 619.5,765.5 620.5,765.5 621.5,765.4 622.5,765.2 623.5,765.0 624.5,764.7 625.5,764.1 626.5,763.1 627.5,761.7 628.5,759.7 629.5,757.0 630.5,753.6 631.5,749.4 632.5,744.5 633.5,739.3 634.5,734.0 635.5,729.0 636.5,724.9 637.5,721.9 638.5,720.5 639.5,720.7 640.5,722.6 641.5,726.1 642.5,730.7 643.5,735.9 644.5,741.5 645.5,746.8 646.5,751.8 647.5,756.0 648.5,759.5 649.5,762.3 650.5,764.4 651.5,765.9 652.5,767.0 653.5,767.9 654.5,768.6 655.5,769.1 656.5,769.5 657.5,769.9 658.5,770.2 659.5,770.5 660.5,770.8 661.5,771.1 662.5,771.4 663.5,771.7 664.5,772.0 665.5,772.3 666.5,772.6 667.5,772.9 668.5,772.9 669.5,772.8 670.5,772.6 671.5,772.4 672.5,772.3 673.5,772.1 674.5,772.0 675.5,771.8 676.5,771.6 677.5,771.4 678.5,770.9 679.5,769.9 680.5,767.9 681.5,764.6 682.5,759.3 683.5,752.6 684.5,746.5 685.5,743.2 686.5,744.3 687.5,749.4 688.5,756.4 689.5,763.1 690.5,768.0 691.5,771.0 692.5,772.6 693.5,773.3 694.5,773.7 695.5,774.0 696.5,774.2 697.5,774.4 698.5,774.6 699.5,774.8 700.5,775.0 701.5,775.1 702.5,775.1 703.5,775.2 704.5,775.3 705.5,775.4 706.5,775.4 707.5,775.4 708.5,775.0 709.5,773.6 710.5,770.6 711.5,766.3 712.5,762.9 713.5,763.0 714.5,766.5 715.5,771.0 716.5,774.1 717.5,775.7 718.5,776.2 719.5,776.4 720.5,776.5 721.5,776.6 722.5,776.6 723.5,776.7 724.5,776.8 725.5,776.9 726.5,776.9 727.5,777.0 728.5,777.1 729.5,776.3 730.5,773.3 731.5,767.5 732.5,763.2 733.5,765.6 734.5,772.0 735.5,776.7 736.5,777.2 737.5,778.4 738.5,778.6 739.5,778.0 740.5,777.5 741.5,777.8 742.5,779.3 743.5,777.3 744.5,779.3 745.5,779.1 746.5,778.0 747.5,779.3 748.5,780.4 749.5,780.3 750.5,779.1 751.5,782.3 752.5,781.9 753.5,782.7 754.5,781.1 755.5,782.8 756.5,783.3 757.5,786.9 758.5,785.2 759.5,784.6 760.5,785.5 761.5,786.9 762.5,786.5 763.5,784.6 764.5,784.2 765.5,786.5 766.5,785.3 767.5,785.6 768.5,783.6 769.5,783.5 770.5,785.4 771.5,784.5 772.5,783.3 773.5,786.0 774.5,785.0 775.5,785.5 776.5,783.1 777.5,785.6 778.5,783.0 779.5,785.5 780.5,784.1 781.5,783.7 782.5,784.3 783.5,785.4 784.5,783.3 785.5,783.0 786.5,784.4 787.5,783.7 788.5,783.4 789.5,783.7 790.5,783.6 791.5,784.2 792.5,784.7 793.5,784.9 794.5,786.5 795.5,785.2 796.5,786.0 797.5,785.0 798.5,785.5 799.5,784.5 800.5,785.2 801.5,784.4 802.5,786.7 803.5,786.2 804.5,785.0 805.5,785.9 806.5,787.4 807.5,784.7 808.5,787.0 809.5,785.8 810.5,786.0 811.5,787.1 812.5,785.7 813.5,786.0 814.5,786.6 815.5,787.6 816.5,785.6 817.5,787.3 818.5,786.9 819.5,786.8 820.5,786.1 821.5,786.0 822.5,785.1 823.5,785.5 824.5,785.3 825.5,787.6 826.5,786.1 827.5,785.9 828.5,785.7 829.5,788.1 830.5,788.3 831.5,787.7 832.5,786.5 833.5,786.4 834.5,786.6 835.5,787.2 836.5,786.2 837.5,787.2 838.5,786.7 839.5,788.9 840.5,789.0 841.5,787.7 842.5,786.8 843.5,789.1 844.5,787.1 845.5,787.3 846.5,786.2 847.5,787.4 848.5,787.8 849.5,787.9 850.5,786.9 851.5,787.9 852.5,786.4 853.5,787.2 854.5,786.7 855.5,787.7 856.5,786.6 857.5,786.6 858.5,787.5 859.5,787.3 860.5,788.5 861.5,788.3 862.5,789.1 863.5,788.8 864.5,789.0 865.5,789.6 866.5,788.1 867.5,787.9 868.5,790.0 869.5,787.4 870.5,789.3 871.5,789.0 872.5,787.1 873.5,789.7 874.5,789.9 875.5,789.1 876.5,789.5 877.5,789.8 878.5,787.6 879.5,788.9 880.5,788.9 881.5,790.0 882.5,789.9 883.5,790.0 884.5,789.3 885.5,790.3 886.5,789.6 887.5,789.7 888.5,788.3 889.5,787.6 890.5,788.0 891.5,788.8 892.5,788.0 893.5,790.4 894.5,789.5 895.5,789.7 896.5,789.8 897.5,790.0 898.5,789.4 899.5,787.9 900.5,790.5 901.5,790.3 902.5,789.6 903.5,789.7 904.5,790.2 905.5,788.3 906.5,790.5 907.5,789.0 908.5,788.5 909.5,789.1 910.5,790.6 911.5,789.0 912.5,790.7 913.5,791.5 914.5,790.0 915.5,789.7 916.5,790.1 917.5,790.8 918.5,791.1 919.5,790.6 920.5,790.8 921.5,789.0 922.5,789.3 923.5,789.6 924.5,791.2 925.5,789.9 926.5,790.8 927.5,789.0 928.5,789.2 929.5,789.9 930.5,791.3 931.5,791.4 932.5,791.3 933.5,790.2 934.5,790.9 935.5,790.8 936.5,790.8 937.5,789.8 938.5,792.3 939.5,790.1 940.5,792.6 941.5,792.5 942.5,789.6 943.5,791.1 944.5,792.3 945.5,792.8 946.5,791.2 947.5,790.6 948.5,790.5 949.5,792.9 950.5,790.6 951.5,791.8 952.5,790.4 953.5,791.7 954.5,793.1 955.5,790.5 956.5,792.8 957.5,791.8 958.5,793.1 959.5,792.5 960.5,791.0 961.5,793.2 962.5,791.9 963.5,790.5 964.5,790.5 965.5,792.1 966.5,792.0 967.5,791.5 968.5,791.1 969.5,791.8 970.5,791.7 971.5,793.4 972.5,790.8 973.5,793.2 974.5,793.5 975.5,791.3 976.5,793.9 977.5,793.3 978.5,793.9 979.5,792.0 980.5,792.3 981.5,792.4 982.5,794.4 983.5,793.1 984.5,792.4 985.5,792.7 986.5,792.2 987.5,791.5 988.5,791.7 989.5,794.1 990.5,792.4 991.5,794.5 992.5,792.4 993.5,792.5 994.5,793.3 995.5,792.3 996.5,792.9 997.5,794.8 998.5,794.6 999.5,794.5 1000.5,793.9 1001.5,794.9 1002.5,795.0 1003.5,793.7 1004.5,794.3 1005.5,792.2 1006.5,794.4 1007.5,793.5 1008.5,794.5 1009.5,794.2 1010.5,793.1 1011.5,792.4 1012.5,795.2 1013.5,792.7 1014.5,793.8 1015.5,793.4 1016.5,793.3 1017.5,794.7 1018.5,795.5 1019.5,793.3 1020.5,794.6 1021.5,793.4 1022.5,794.3 1023.5,793.8 1024.5,793.1 1025.5,793.1 1026.5,793.3 1027.5,795.5 1028.5,794.3 1029.5,793.4 1030.5,795.6 1031.5,795.9 1032.5,794.2 1033.5,793.3 1034.5,793.5 1035.5,793.2 1036.5,794.0 1037.5,793.2 1038.5,793.7 1039.5,793.8 1040.5,794.8 1041.5,795.9 1042.5,795.5 1043.5,794.4 1044.5,794.4 1045.5,794.8 1046.5,794.4 1047.5,794.3" fill="none" stroke="#ffffff" stroke-width="1.4" stroke-linejoin="round" clip-path="url(#specclip)" shape-rendering="geometricPrecision"/>
<line x1="759.2" y1="762" x2="759.2" y2="784.788" stroke="#4ce64c" stroke-width="1.6"/>
<line x1="770" y1="769.5" x2="770" y2="786.3" stroke="#4ce64c" stroke-width="1.6"/>
<line x1="779" y1="767.2" x2="779" y2="787.1714285714286" stroke="#4ce64c" stroke-width="1.6"/>
<line x1="794" y1="771.4" x2="794" y2="787.8142857142857" stroke="#4ce64c" stroke-width="1.6"/>
<line x1="800.6" y1="777" x2="800.6" y2="788.0971428571429" stroke="#4ce64c" stroke-width="1.6"/>
<line x1="811.5" y1="772.8" x2="811.5" y2="788.54875" stroke="#4ce64c" stroke-width="1.6"/>
<line x1="816.5" y1="775.6" x2="816.5" y2="788.71125" stroke="#4ce64c" stroke-width="1.6"/>
<line x1="826" y1="778.4" x2="826" y2="789.02" stroke="#4ce64c" stroke-width="1.6"/>
<line x1="837.5" y1="781.2" x2="837.5" y2="789.39375" stroke="#4ce64c" stroke-width="1.6"/>
<line x1="847.5" y1="780.8" x2="847.5" y2="789.71875" stroke="#4ce64c" stroke-width="1.6"/>
<line x1="887.5" y1="752" x2="887.5" y2="791.075" stroke="#4ce64c" stroke-width="1.6"/>
<line x1="914.3" y1="754" x2="914.3" y2="792.072" stroke="#4ce64c" stroke-width="1.6"/>
<line x1="949.5" y1="762" x2="949.5" y2="793.48" stroke="#4ce64c" stroke-width="1.6"/>
<line x1="981" y1="783.7" x2="981" y2="794.43" stroke="#4ce64c" stroke-width="1.6"/>
<line x1="1002.3" y1="783.7" x2="1002.3" y2="795.0587234042554" stroke="#4ce64c" stroke-width="1.6"/>
<line x1="1031.7" y1="790" x2="1031.7" y2="795.8093617021277" stroke="#4ce64c" stroke-width="1.6"/>
<line x1="1040" y1="788" x2="1040" y2="796.0212765957447" stroke="#4ce64c" stroke-width="1.6"/>
<line x1="1043" y1="789" x2="1043" y2="796.0978723404256" stroke="#4ce64c" stroke-width="1.6"/>
<line x1="1046" y1="788" x2="1046" y2="796.1744680851065" stroke="#4ce64c" stroke-width="1.6"/>
<line x1="759.5" y1="774.7" x2="759.5" y2="786.75" stroke="#fff" stroke-width="1.6"/>
<line x1="770" y1="774.2" x2="770" y2="785.8235294117648" stroke="#fff" stroke-width="1.6"/>
<line x1="786.5" y1="777" x2="786.5" y2="785.4166666666667" stroke="#fff" stroke-width="1.6"/>
<line x1="794" y1="780.3" x2="794" y2="786.6666666666666" stroke="#fff" stroke-width="1.6"/>
<line x1="808" y1="781" x2="808" y2="787.0" stroke="#fff" stroke-width="1.6"/>
<line x1="887.5" y1="769.5" x2="887.5" y2="790.0990566037735" stroke="#fff" stroke-width="1.6"/>
<line x1="914.3" y1="759.3" x2="914.3" y2="791.072" stroke="#fff" stroke-width="1.6"/>
<line x1="934.6" y1="780.6" x2="934.6" y2="791.884" stroke="#fff" stroke-width="1.6"/>
<line x1="949.5" y1="768.4" x2="949.5" y2="792.48" stroke="#fff" stroke-width="1.6"/>
<line x1="961.6" y1="773.5" x2="961.6" y2="792.964" stroke="#fff" stroke-width="1.6"/>
<line x1="988.7" y1="782.7" x2="988.7" y2="794.048" stroke="#fff" stroke-width="1.6"/>
<line x1="995.6" y1="786.7" x2="995.6" y2="794.324" stroke="#fff" stroke-width="1.6"/>
<line x1="1008.4" y1="779.6" x2="1008.4" y2="794.7323404255319" stroke="#fff" stroke-width="1.6"/>
<line x1="1013.4" y1="776.6" x2="1013.4" y2="794.8706382978722" stroke="#fff" stroke-width="1.6"/>
<line x1="1018.5" y1="783.7" x2="1018.5" y2="795.0117021276595" stroke="#fff" stroke-width="1.6"/>
<line x1="1023.6" y1="781.6" x2="1023.6" y2="795.1527659574468" stroke="#fff" stroke-width="1.6"/>
<line x1="1027.7" y1="781.6" x2="1027.7" y2="795.2661702127659" stroke="#fff" stroke-width="1.6"/>
<rect x="840" y="576" width="1" height="4" fill="#4ce64c" />
<rect x="840" y="579" width="2" height="119" fill="#ffffff" />
<rect x="840" y="697" width="1" height="92" fill="#ffffff" />
<rect x="841" y="697" width="1" height="92" fill="#d8f8d8" />
<rect x="583" y="550" width="98" height="41" fill="#ffffff" />
<rect x="584" y="551" width="96" height="39" fill="#4a7a4a" />
<rect x="585" y="552" width="94" height="37" fill="#b4d6b4" />
<text x="587" y="569.5" font-family="Liberation Sans" font-size="11.5" font-weight="bold" fill="#0a140a" textLength="41.5" lengthAdjust="spacingAndGlyphs" stroke="#0a140a" stroke-width="0.7">RIGHT</text>
<text x="651.3" y="568.5" font-family="Liberation Sans" font-size="11.5" font-weight="bold" fill="#0a140a" textLength="26.2" lengthAdjust="spacingAndGlyphs" stroke="#0a140a" stroke-width="0.7">ARK</text>
<polyline points="585,572 632.5,572 635.5,559 639,574.5 643,552.5 647,570.5 679,570.5" fill="none" stroke="#22dd22" stroke-width="2.4" stroke-linejoin="miter" shape-rendering="geometricPrecision"/>
<text x="587" y="586" font-family="Liberation Sans" font-size="11.5" font-weight="bold" fill="#404a40" textLength="91.5" lengthAdjust="spacingAndGlyphs" >Audio Analyzer</text>
<text x="586" y="585" font-family="Liberation Sans" font-size="11.5" font-weight="bold" fill="#ffffff" textLength="91.5" lengthAdjust="spacingAndGlyphs" >Audio Analyzer</text>
<text x="693" y="564.6" font-family="Liberation Sans" font-size="12.5" font-weight="bold" fill="#ffffff" textLength="88.4" lengthAdjust="spacingAndGlyphs" >Left channel</text>
<text x="693" y="581" font-family="Liberation Sans" font-size="12.5" font-weight="bold" fill="#4ce64c" textLength="97.5" lengthAdjust="spacingAndGlyphs" >Right channel</text>
<text x="1051" y="549.7" font-family="Liberation Sans" font-size="12" font-weight="normal" fill="#000" textLength="12" lengthAdjust="spacingAndGlyphs" >dB</text>
<text x="1050" y="575" font-family="Liberation Sans" font-size="12" font-weight="normal" fill="#000" textLength="12.5" lengthAdjust="spacingAndGlyphs" >+0</text>
<text x="1050" y="595" font-family="Liberation Sans" font-size="12" font-weight="normal" fill="#000" textLength="16" lengthAdjust="spacingAndGlyphs" >-10</text>
<text x="1050" y="615" font-family="Liberation Sans" font-size="12" font-weight="normal" fill="#000" textLength="16" lengthAdjust="spacingAndGlyphs" >-20</text>
<text x="1050" y="635" font-family="Liberation Sans" font-size="12" font-weight="normal" fill="#000" textLength="16" lengthAdjust="spacingAndGlyphs" >-30</text>
<text x="1050" y="655" font-family="Liberation Sans" font-size="12" font-weight="normal" fill="#000" textLength="16" lengthAdjust="spacingAndGlyphs" >-40</text>
<text x="1050" y="674" font-family="Liberation Sans" font-size="12" font-weight="normal" fill="#000" textLength="16" lengthAdjust="spacingAndGlyphs" >-50</text>
<text x="1050" y="694" font-family="Liberation Sans" font-size="12" font-weight="normal" fill="#000" textLength="16" lengthAdjust="spacingAndGlyphs" >-60</text>
<text x="1050" y="714" font-family="Liberation Sans" font-size="12" font-weight="normal" fill="#000" textLength="16" lengthAdjust="spacingAndGlyphs" >-70</text>
<text x="1050" y="734" font-family="Liberation Sans" font-size="12" font-weight="normal" fill="#000" textLength="16" lengthAdjust="spacingAndGlyphs" >-80</text>
<text x="1050" y="754" font-family="Liberation Sans" font-size="12" font-weight="normal" fill="#000" textLength="16" lengthAdjust="spacingAndGlyphs" >-90</text>
<text x="1050" y="773" font-family="Liberation Sans" font-size="12" font-weight="normal" fill="#000" textLength="22" lengthAdjust="spacingAndGlyphs" >-100</text>
<text x="1050" y="793" font-family="Liberation Sans" font-size="12" font-weight="normal" fill="#000" textLength="22" lengthAdjust="spacingAndGlyphs" >-110</text>
<text x="1050" y="813" font-family="Liberation Sans" font-size="12" font-weight="normal" fill="#000" textLength="22" lengthAdjust="spacingAndGlyphs" >-120</text>
<text x="1050" y="833" font-family="Liberation Sans" font-size="12" font-weight="normal" fill="#000" textLength="22" lengthAdjust="spacingAndGlyphs" >-130</text>
<text x="604.5" y="848.8" font-family="Liberation Sans" font-size="12" font-weight="normal" fill="#000" textLength="12" lengthAdjust="spacingAndGlyphs" text-anchor="middle" >30</text>
<text x="638.5" y="848.8" font-family="Liberation Sans" font-size="12" font-weight="normal" fill="#000" textLength="12" lengthAdjust="spacingAndGlyphs" text-anchor="middle" >50</text>
<text x="685.5" y="848.8" font-family="Liberation Sans" font-size="12" font-weight="normal" fill="#000" textLength="18" lengthAdjust="spacingAndGlyphs" text-anchor="middle" >100</text>
<text x="732.5" y="848.8" font-family="Liberation Sans" font-size="12" font-weight="normal" fill="#000" textLength="18" lengthAdjust="spacingAndGlyphs" text-anchor="middle" >200</text>
<text x="759.5" y="848.8" font-family="Liberation Sans" font-size="12" font-weight="normal" fill="#000" textLength="18" lengthAdjust="spacingAndGlyphs" text-anchor="middle" >300</text>
<text x="793.5" y="848.8" font-family="Liberation Sans" font-size="12" font-weight="normal" fill="#000" textLength="18" lengthAdjust="spacingAndGlyphs" text-anchor="middle" >500</text>
<text x="840.5" y="848.8" font-family="Liberation Sans" font-size="12" font-weight="normal" fill="#000" textLength="24" lengthAdjust="spacingAndGlyphs" text-anchor="middle" >1000</text>
<text x="887.5" y="848.8" font-family="Liberation Sans" font-size="12" font-weight="normal" fill="#000" textLength="13" lengthAdjust="spacingAndGlyphs" text-anchor="middle" >2K</text>
<text x="914.5" y="848.8" font-family="Liberation Sans" font-size="12" font-weight="normal" fill="#000" textLength="13" lengthAdjust="spacingAndGlyphs" text-anchor="middle" >3K</text>
<text x="949.5" y="848.8" font-family="Liberation Sans" font-size="12" font-weight="normal" fill="#000" textLength="13" lengthAdjust="spacingAndGlyphs" text-anchor="middle" >5K</text>
<text x="995.5" y="848.8" font-family="Liberation Sans" font-size="12" font-weight="normal" fill="#000" textLength="30" lengthAdjust="spacingAndGlyphs" text-anchor="middle" >10000</text>
<text x="1048.6" y="850" font-family="Liberation Sans" font-size="12" font-weight="normal" fill="#000" textLength="13" lengthAdjust="spacingAndGlyphs" >Hz</text>
<rect x="571" y="855" width="503" height="18" fill="#f4f4f4" />
<rect x="571" y="855" width="17" height="18" fill="#f0f0f0" />
<rect x="571" y="855" width="17" height="1" fill="#fcfcfc"/>
<rect x="571" y="855" width="1" height="18" fill="#fcfcfc"/>
<rect x="571" y="872" width="17" height="1" fill="#9a9a9a"/>
<rect x="587" y="855" width="1" height="18" fill="#9a9a9a"/>
<rect x="572" y="871" width="15" height="1" fill="#d0d0d0"/>
<rect x="586" y="856" width="1" height="16" fill="#d0d0d0"/>
<polygon points="580.9,859.8 580.9,867.2 576.1,863.5" fill="#000" shape-rendering="geometricPrecision"/>
<rect x="671" y="855" width="313" height="18" fill="#f0f0f0" />
<rect x="671" y="855" width="313" height="1" fill="#fcfcfc"/>
<rect x="671" y="855" width="1" height="18" fill="#fcfcfc"/>
<rect x="671" y="872" width="313" height="1" fill="#9a9a9a"/>
<rect x="983" y="855" width="1" height="18" fill="#9a9a9a"/>
<rect x="672" y="871" width="311" height="1" fill="#d0d0d0"/>
<rect x="982" y="856" width="1" height="16" fill="#d0d0d0"/>
<rect x="1022" y="855" width="16" height="18" fill="#f0f0f0" />
<rect x="1022" y="855" width="16" height="1" fill="#fcfcfc"/>
<rect x="1022" y="855" width="1" height="18" fill="#fcfcfc"/>
<rect x="1022" y="872" width="16" height="1" fill="#9a9a9a"/>
<rect x="1037" y="855" width="1" height="18" fill="#9a9a9a"/>
<rect x="1023" y="871" width="14" height="1" fill="#d0d0d0"/>
<rect x="1036" y="856" width="1" height="16" fill="#d0d0d0"/>
<polygon points="1027.6,859.8 1027.6,867.2 1032.4,863.5" fill="#000" shape-rendering="geometricPrecision"/>
<rect x="1038" y="855" width="18" height="18" fill="#f0f0f0" />
<rect x="1038" y="855" width="18" height="1" fill="#fcfcfc"/>
<rect x="1038" y="855" width="1" height="18" fill="#fcfcfc"/>
<rect x="1038" y="872" width="18" height="1" fill="#9a9a9a"/>
<rect x="1055" y="855" width="1" height="18" fill="#9a9a9a"/>
<rect x="1039" y="871" width="16" height="1" fill="#d0d0d0"/>
<rect x="1054" y="856" width="1" height="16" fill="#d0d0d0"/>
<circle cx="1046.2" cy="863.1" r="5" fill="none" stroke="#000" stroke-width="2.1" shape-rendering="geometricPrecision"/>
<line x1="1049.8" y1="866.8000000000001" x2="1052.8" y2="869.8000000000001" stroke="#000" stroke-width="2.3" shape-rendering="geometricPrecision"/>
<rect x="1043.3" y="862.2" width="6" height="1.9" fill="#000" />
<rect x="1045.3" y="860.2" width="1.9" height="6" fill="#000" />
<rect x="1056" y="855" width="18" height="18" fill="#f0f0f0" />
<rect x="1056" y="855" width="18" height="1" fill="#fcfcfc"/>
<rect x="1056" y="855" width="1" height="18" fill="#fcfcfc"/>
<rect x="1056" y="872" width="18" height="1" fill="#9a9a9a"/>
<rect x="1073" y="855" width="1" height="18" fill="#9a9a9a"/>
<rect x="1057" y="871" width="16" height="1" fill="#d0d0d0"/>
<rect x="1072" y="856" width="1" height="16" fill="#d0d0d0"/>
<circle cx="1064.1000000000001" cy="862.9" r="4.1" fill="none" stroke="#000" stroke-width="2.0" shape-rendering="geometricPrecision"/>
<line x1="1067.1000000000001" y1="865.9" x2="1070.5" y2="869.6" stroke="#000" stroke-width="2.3" shape-rendering="geometricPrecision"/>
<rect x="1062.0" y="862.2" width="4.2" height="1.7" fill="#000" />
<rect x="572" y="878" width="277" height="22" fill="#f0f0f0" />
<rect x="572" y="878" width="277" height="1" fill="#a0a0a0"/>
<rect x="572" y="878" width="1" height="22" fill="#a0a0a0"/>
<rect x="573" y="879" width="275" height="1" fill="#d8d8d8"/>
<rect x="572" y="899" width="277" height="1" fill="#ffffff"/>
<rect x="848" y="878" width="1" height="22" fill="#ffffff"/>
<text x="575" y="891.6" font-family="Liberation Sans" font-size="12" font-weight="normal" fill="#000" textLength="257.4" lengthAdjust="spacingAndGlyphs" >Cursor:  2502 Hz,  left = -112.72 dB,  right = -112.12 dB</text>
<rect x="856" y="877" width="27" height="26" fill="#f0f0f0" />
<rect x="856" y="877" width="27" height="1" fill="#ffffff"/>
<rect x="856" y="877" width="1" height="26" fill="#ffffff"/>
<rect x="856" y="902" width="27" height="1" fill="#8a8a8a"/>
<rect x="882" y="877" width="1" height="26" fill="#8a8a8a"/>
<rect x="884" y="877" width="27" height="26" fill="#f0f0f0" />
<rect x="884" y="877" width="27" height="1" fill="#ffffff"/>
<rect x="884" y="877" width="1" height="26" fill="#ffffff"/>
<rect x="884" y="902" width="27" height="1" fill="#8a8a8a"/>
<rect x="910" y="877" width="1" height="26" fill="#8a8a8a"/>
<rect x="912" y="877" width="27" height="26" fill="#f0f0f0" />
<rect x="912" y="877" width="27" height="1" fill="#ffffff"/>
<rect x="912" y="877" width="1" height="26" fill="#ffffff"/>
<rect x="912" y="902" width="27" height="1" fill="#8a8a8a"/>
<rect x="938" y="877" width="1" height="26" fill="#8a8a8a"/>
<rect x="940" y="877" width="27" height="26" fill="#f0f0f0" />
<rect x="940" y="877" width="27" height="1" fill="#ffffff"/>
<rect x="940" y="877" width="1" height="26" fill="#ffffff"/>
<rect x="940" y="902" width="27" height="1" fill="#8a8a8a"/>
<rect x="966" y="877" width="1" height="26" fill="#8a8a8a"/>
<text x="869.2" y="897.8" font-family="Liberation Serif" font-size="24" font-weight="bold" fill="#000" text-anchor="middle" shape-rendering="geometricPrecision">A</text>
<rect x="887.3" y="879.7" width="22" height="23" fill="#c6c6c8" />
<polygon points="894.1,882.5 896.3,880.2 901.5,880.2 903.4,882.2 905.9,881.0 905.9,887.7 899.3,887.7 901.3,885.6 900.3,883.6 896.4,883.6 895.6,884.4" fill="#0010d8" shape-rendering="geometricPrecision"/>
<polygon points="888.1,883.3 893.6,883.3 893.6,889.6 892.3,888.6 891.2,889.4 892.4,895.4 891.6,895.8 888.1,892.9" fill="#0010d8" shape-rendering="geometricPrecision"/>
<polygon points="905.6,889.0 905.9,896.1 899.9,900.5 894.1,895.6 898.8,891.2 899.6,893.8 901.4,893.9 904.0,891.0" fill="#0010d8" shape-rendering="geometricPrecision"/>
<line x1="914.6" y1="897.6" x2="924.6" y2="888.6" stroke="#3c3c3c" stroke-width="5" stroke-linecap="round" shape-rendering="geometricPrecision"/>
<line x1="914.6" y1="897.6" x2="924.6" y2="888.6" stroke="#e0e0e0" stroke-width="2.6" stroke-linecap="round" shape-rendering="geometricPrecision"/>
<circle cx="928.4" cy="886.5" r="5.6" fill="#bdbdbd" stroke="#3c3c3c" stroke-width="1.6" shape-rendering="geometricPrecision"/>
<circle cx="929.6" cy="885.8" r="2.4" fill="#eeeeee" stroke="#555" stroke-width="1" shape-rendering="geometricPrecision"/>
<path d="M931.5,880.2 L935.2,883.5 L932.5,885.2 Z" fill="#f0f0f0" shape-rendering="geometricPrecision"/>
<rect x="943.5" y="880" width="19.5" height="19.6" fill="#84841c" />
<rect x="947.0" y="881" width="12.5" height="8" fill="#ececec" />
<rect x="947.0" y="893" width="13.0" height="6.600000000000001" fill="#000" />
<rect x="955.5" y="894" width="3" height="5.600000000000001" fill="#ffffff" />
<rect x="960.5" y="881" width="1.5" height="1.5" fill="#ececec" />
<rect x="564" y="906" width="513" height="5" fill="#bcd2ea" />
</svg>
</body></html>
